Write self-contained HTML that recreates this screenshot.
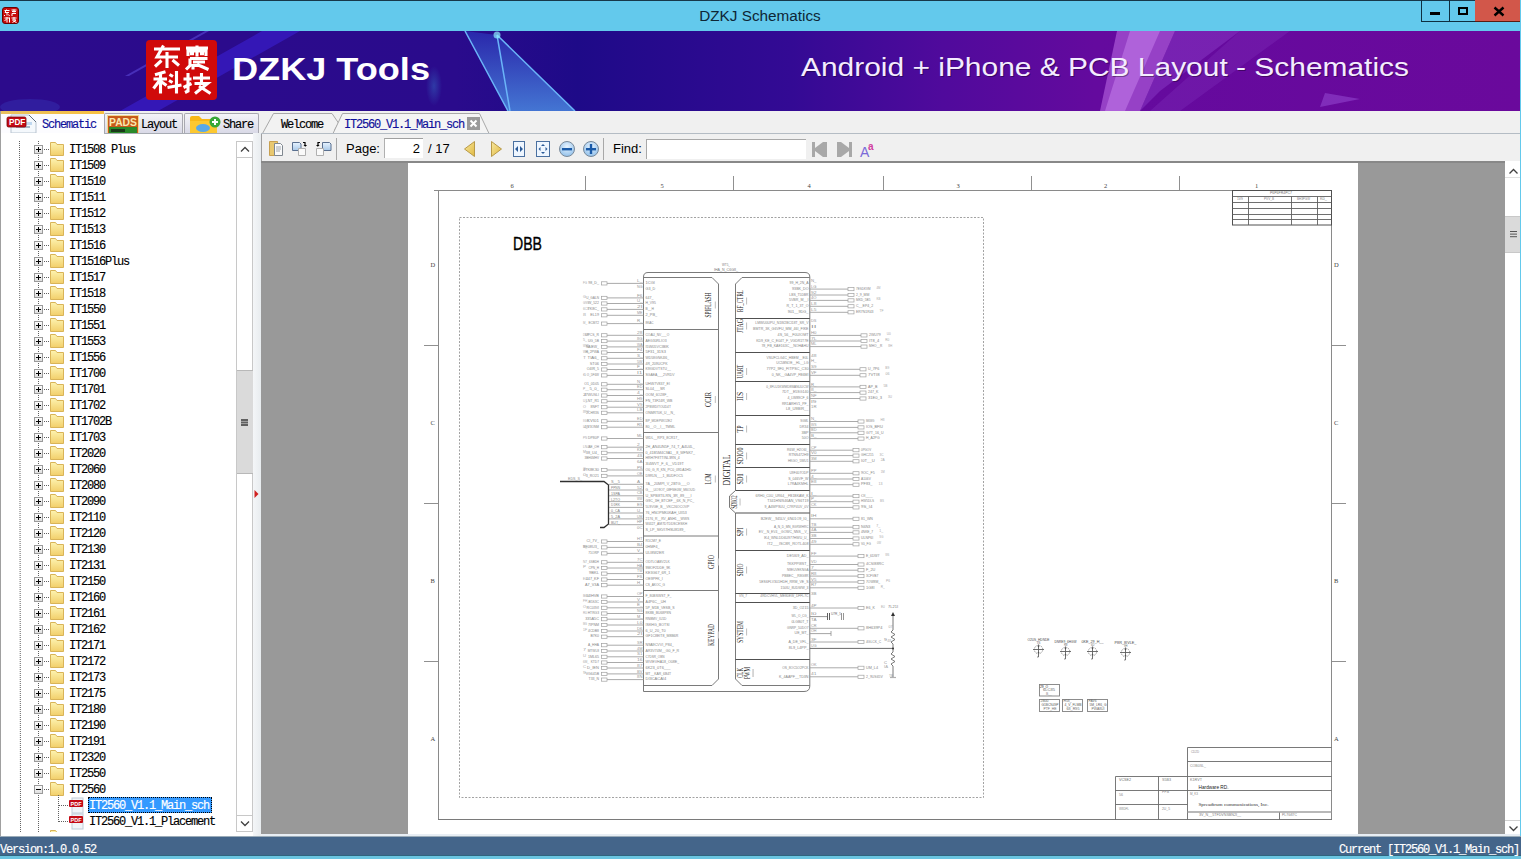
<!DOCTYPE html>
<html><head><meta charset="utf-8">
<style>
*{margin:0;padding:0;box-sizing:border-box}
html,body{width:1521px;height:859px;overflow:hidden;background:#f0f0f0;font-family:"Liberation Sans",sans-serif}
.abs{position:absolute}
.mono{font-family:"Liberation Mono",monospace;font-size:12px;letter-spacing:-1.2px;white-space:pre;line-height:16px;-webkit-text-stroke:0.15px currentColor}
#title{left:0;top:0;width:1521px;height:31px;background:#63c9ec;border-top:1px solid #17384a}
#banner{left:0;top:31px;width:1520px;height:80px;overflow:hidden}
#tabs{left:0;top:111px;width:1520px;height:22px;background:#f0f0f0}
#left{left:0;top:133px;width:258px;height:703px;background:#fff;border-left:1px solid #a0a0a0}
#tool{left:261px;top:133px;width:1259px;height:28px;background:#f0f0f0;border-top:1px solid #b4bcc4}
#viewer{left:261px;top:161px;width:1244px;height:673px;background:#999;border-top:2px solid #888}
#page{left:408px;top:163px;width:950px;height:671px;background:#fff}
#vscroll{left:1505px;top:161px;width:15px;height:673px;background:#fff}
#status{left:0;top:836px;width:1521px;height:23px;background:#44658a;border-top:1px solid #9aabb8;border-bottom:3px solid #6ac4e0;box-shadow:inset 0 -1px 0 #30647e}
#rborder{left:1520px;top:0;width:1px;height:859px;background:#63c9ec}
</style></head><body>
<div id="title" class="abs">
 <svg class="abs" style="left:2px;top:6px" width="17" height="17" viewBox="0 0 17 17">
  <rect x="0.5" y="0.5" width="16" height="16" rx="2.5" fill="#c80c0c" stroke="#6a0000" stroke-width="1"/>
  <g stroke="#fff" stroke-width="1" fill="none">
   <path d="M2.5 3.5h5M4.5 2.5l-1.5 3h4M5 5v3.5M3 8l-1 1M6.5 7.5l1 1.5M9.5 3h5M12 2.5v3M10 4.5h4M10 6.5h4M10 6.5v2.5"/>
   <path d="M2.5 11h5M5 10v5.5M4.5 12l-2 2M7.5 10.5v5M9.5 11h5M12 10v3M10 13h4l-3.5 2.5M11.5 14l3 1.5"/>
  </g>
 </svg>
 <div class="abs" style="left:0;width:1520px;top:6px;text-align:center;font-size:15.3px;color:#0e2636">DZKJ Schematics</div>
 <div class="abs" style="left:1421px;top:-1px;width:29px;height:22px;border:1px solid #0e2f40;border-top:none;border-right:none"></div>
 <div class="abs" style="left:1449px;top:-1px;width:27px;height:22px;border:1px solid #0e2f40;border-top:none"></div>
 <div class="abs" style="left:1475px;top:-1px;width:46px;height:22px;background:#d2574a;border-bottom:1px solid #5a1a10"></div>
 <div class="abs" style="left:1430px;top:11px;width:10px;height:3px;background:#000"></div>
 <div class="abs" style="left:1458px;top:6px;width:10px;height:8px;border:2px solid #000"></div>
 <svg class="abs" style="left:1493px;top:5px" width="12" height="11" viewBox="0 0 12 11"><path d="M1.5 1.5L10.5 9.5M10.5 1.5L1.5 9.5" stroke="#000" stroke-width="2.4"/></svg>
</div>
<div id="banner" class="abs">
 <svg width="1520" height="80" viewBox="0 0 1520 80" style="display:block">
  <defs>
   <linearGradient id="bg" x1="0" x2="1" y1="0" y2="0">
    <stop offset="0" stop-color="#2c0b8c"/>
    <stop offset="0.30" stop-color="#2a0b8c"/>
    <stop offset="0.38" stop-color="#1e0a88"/>
    <stop offset="0.52" stop-color="#330a94"/>
    <stop offset="0.62" stop-color="#500a9c"/>
    <stop offset="0.72" stop-color="#640a9e"/>
    <stop offset="1" stop-color="#6a099c"/>
   </linearGradient>
   <radialGradient id="glow" cx="0.5" cy="0.5" r="0.5"><stop offset="0" stop-color="#3aa0e0" stop-opacity="0.9"/><stop offset="1" stop-color="#3aa0e0" stop-opacity="0"/></radialGradient>
   <linearGradient id="tri" x1="0" y1="0" x2="0" y2="1"><stop offset="0" stop-color="#2a2cb0"/><stop offset="1" stop-color="#4a88e0"/></linearGradient>
  </defs>
  <rect width="1520" height="80" fill="url(#bg)"/>
  <polygon points="120,80 262,0 300,0 158,80" fill="#3c22d8" opacity="0.55"/>
  <polygon points="125,45 205,0 209,0 129,45" fill="#6a5af0" opacity="0.45"/>
  <ellipse cx="30" cy="76" rx="30" ry="8" fill="#3a40c0" opacity="0.35"/>
  <ellipse cx="434" cy="55" rx="8" ry="20" fill="url(#glow)" opacity="0.35"/>
  <polygon points="465,0 497,4 575,80 508,80" fill="url(#tri)" opacity="0.85"/>
  <path d="M465,0 L508,80 M497,4 L510,80 M497,4 L575,80" stroke="#6ab4f8" stroke-width="1.5" fill="none"/>
  <circle cx="497" cy="4" r="3.5" fill="#8ef0ff" opacity="0.7"/>
  <polygon points="1117,0 1175,0 1140,80 1100,80" fill="#c070e8" opacity="0.55"/>
  <polygon points="1130,0 1160,0 1125,80 1105,80" fill="#e0a0ff" opacity="0.35"/>
  <polygon points="1175,0 1240,0 1160,60 1140,80" fill="#9a50d8" opacity="0.35"/>
  <polygon points="1240,0 1290,0 1180,80 1150,80" fill="#8a40c8" opacity="0.25"/>
  <polygon points="1325,62 1360,68 1320,76" fill="#9a50d8" opacity="0.5"/>
  <rect x="146" y="9" width="71" height="60" rx="4" fill="#d00a0a"/>
  <g stroke="#fff" stroke-width="3.1" fill="none" stroke-linecap="butt" stroke-linejoin="miter">
   <path d="M154,18 H180 M163.5,14.5 L157,26 H178 M167,21 V37 M161.5,29.5 L155,35.5 M172.5,29 L179,34.5"/>
   <path d="M186,17 H208 M197,14.5 V25.5 M188,25 V20 H206 V25 M190,22.8 H194 M200,22.8 H204 M190,27.5 H207.5 M190,27.5 V34.5 L186,38.5 M193,31 H205 M193,34.5 H200 M193,33 V38.5 M197,33.5 L208.5,38.5"/>
   <path d="M165.5,40.8 L155,43.8 M153.5,48 H167 M160.5,42 V62.5 M160,49 L153.5,57.5 M161,50.5 L166.5,54.5 M169.5,43.5 L173,45.5 M169,49.5 L172.5,51.5 M167.5,56.5 L181.5,54 M176.5,40 V62.5"/>
   <path d="M183.5,48 H191.5 M188,42 V60 L185,61.5 M183.5,56.5 L191.5,52.5 M193,47 H210 M201.5,42 V52 M194.5,52.5 H207.5 L195,62.5 M199,55 L210.5,62.5"/>
  </g>
  <g fill="#fff" font-family="Liberation Sans" >
   <text x="232" y="48.8" font-size="30.5" font-weight="bold" textLength="198" lengthAdjust="spacingAndGlyphs">DZKJ Tools</text>
  </g>
  <text x="801" y="44.7" font-size="25.5" fill="#000" opacity="0.35" font-family="Liberation Sans" textLength="608" lengthAdjust="spacingAndGlyphs" transform="translate(1,1)">Android + iPhone &amp; PCB Layout - Schematics</text>
  <text x="801" y="44.7" font-size="25.5" fill="#f4ecff" font-family="Liberation Sans" textLength="608" lengthAdjust="spacingAndGlyphs">Android + iPhone &amp; PCB Layout - Schematics</text>
 </svg>
</div>
<div id="rborder" class="abs"></div>
<div id="tabs" class="abs">
 <!-- Schematic active tab -->
 <div class="abs" style="left:0;top:0;width:104px;height:23px;background:#fcfcff;border-left:1px solid #a0a0a0"></div>
 <div class="abs" style="left:1px;top:0;width:103px;height:3px;background:linear-gradient(90deg,#e8c060,#f8c040)"></div>
 <svg class="abs" style="left:5px;top:2px" width="36" height="22" viewBox="0 0 36 22">
  <path d="M6 2 H24 L31 9 V20 H6 Z" fill="#f4f8fc" stroke="#b8c4d0" stroke-width="1"/>
  <path d="M24 2 L31 9" stroke="#607080" stroke-width="1"/>
  <rect x="11" y="13" width="14" height="2" fill="#a8b8c8"/>
  <rect x="19" y="9" width="8" height="3" fill="#c0d8f0"/>
  <rect x="2" y="4" width="19" height="10" rx="1.5" fill="#c40a14" stroke="#7a0008" stroke-width="0.8"/>
  <text x="4" y="12.3" font-size="8.2" font-weight="bold" fill="#fff" font-family="Liberation Sans">PDF</text>
 </svg>
 <div class="abs mono" style="left:42px;top:6px;color:#10109a">Schematic</div>
 <!-- Layout tab -->
 <div class="abs" style="left:104px;top:2px;width:79px;height:21px;background:linear-gradient(#f4f4f8,#d8d8e6);border:1px solid #a8a8b0;border-bottom:none;border-radius:2px 2px 0 0"></div>
 <svg class="abs" style="left:107px;top:4px" width="32" height="19" viewBox="0 0 32 19">
  <rect x="0.5" y="0.5" width="31" height="18.5" fill="#c85a1a" stroke="#f0d890" stroke-width="1"/>
  <text x="2" y="10.5" font-size="10.5" font-weight="bold" fill="#f8e8b0" font-family="Liberation Sans" textLength="28" lengthAdjust="spacingAndGlyphs">PADS</text>
  <rect x="2" y="12" width="28" height="7" fill="#2a8a2a"/>
  <rect x="4" y="14" width="14" height="3" fill="#1a3a1a"/>
 </svg>
 <div class="abs mono" style="left:141px;top:6px;color:#000">Layout</div>
 <!-- Share tab -->
 <div class="abs" style="left:184px;top:2px;width:75px;height:21px;background:linear-gradient(#f4f4f8,#d8d8e6);border:1px solid #a8a8b0;border-bottom:none;border-radius:2px 2px 0 0"></div>
 <svg class="abs" style="left:189px;top:4px" width="34" height="19" viewBox="0 0 34 19">
  <path d="M1 3 Q1 1 3 1 H10 L13 4 H28 V19 H1 Z" fill="#f8b818"/>
  <path d="M1 6 H28 V19 H1 Z" fill="#fcc830"/>
  <ellipse cx="14" cy="13" rx="7" ry="4" fill="#58a8e8"/>
  <circle cx="26" cy="7" r="5.5" fill="#38a838"/>
  <path d="M26 4 V10 M23 7 H29" stroke="#fff" stroke-width="2"/>
 </svg>
 <div class="abs mono" style="left:223px;top:6px;color:#000">Share</div>
 <!-- Welcome tab -->
 <svg class="abs" style="left:258px;top:0" width="240" height="23" viewBox="0 0 240 23">
  <path d="M4.5 22.5 L15.5 2.5 H74 L80.5 12 L76.5 19" fill="#f2f2f2" stroke="#a8a8a8" stroke-width="1"/>
  <path d="M75 22.5 L84.5 2.5 H221.5 L231 22.5" fill="#f4f4f4" stroke="#a8a8a8" stroke-width="1"/>
  <path d="M0 22.5 H4.5" stroke="#a8a8a8"/>
 </svg>
 <div class="abs mono" style="left:281px;top:6px;color:#000">Welcome</div>
 <div class="abs mono" style="left:344px;top:6px;color:#10109a">IT2560_V1.1_Main_sch</div>
 <div class="abs" style="left:467px;top:6px;width:13px;height:13px;background:#9a9a9a"></div>
 <svg class="abs" style="left:467px;top:6px" width="13" height="13" viewBox="0 0 13 13"><path d="M3.5 3.5L9.5 9.5M9.5 3.5L3.5 9.5" stroke="#fff" stroke-width="2"/></svg>
</div>
<div id="left" class="abs" style="overflow:hidden">
<svg class="abs" style="left:0;top:0" width="258" height="703" viewBox="0 133 258 703">
<defs><linearGradient id="fold" x1="0" y1="0" x2="0" y2="1"><stop offset="0" stop-color="#fdf3b0"/><stop offset="1" stop-color="#f2cf6a"/></linearGradient><linearGradient id="pbox" x1="0" y1="0" x2="0" y2="1"><stop offset="0" stop-color="#ffffff"/><stop offset="1" stop-color="#dcdcdc"/></linearGradient></defs>
<line x1="18.5" y1="141" x2="19.5" y2="832" stroke="#606060" stroke-width="1" stroke-dasharray="1 1"/>
<line x1="37.5" y1="141" x2="37.5" y2="832" stroke="#606060" stroke-width="1" stroke-dasharray="1 1"/>
<line x1="43" y1="149.5" x2="49" y2="149.5" stroke="#606060" stroke-dasharray="1 1"/>
<rect x="33.5" y="145.5" width="8" height="8" fill="url(#pbox)" stroke="#9a9a9a"/>
<path d="M35 149.5h5" stroke="#000" stroke-width="1"/>
<path d="M37.5 147v5" stroke="#000" stroke-width="1"/>
<path d="M49.5 142.5 h5 l1.5 2 h6.5 v11 h-13 z" fill="url(#fold)" stroke="#d9b458" stroke-width="1"/>
<line x1="43" y1="165.5" x2="49" y2="165.5" stroke="#606060" stroke-dasharray="1 1"/>
<rect x="33.5" y="161.5" width="8" height="8" fill="url(#pbox)" stroke="#9a9a9a"/>
<path d="M35 165.5h5" stroke="#000" stroke-width="1"/>
<path d="M37.5 163v5" stroke="#000" stroke-width="1"/>
<path d="M49.5 158.5 h5 l1.5 2 h6.5 v11 h-13 z" fill="url(#fold)" stroke="#d9b458" stroke-width="1"/>
<line x1="43" y1="181.5" x2="49" y2="181.5" stroke="#606060" stroke-dasharray="1 1"/>
<rect x="33.5" y="177.5" width="8" height="8" fill="url(#pbox)" stroke="#9a9a9a"/>
<path d="M35 181.5h5" stroke="#000" stroke-width="1"/>
<path d="M37.5 179v5" stroke="#000" stroke-width="1"/>
<path d="M49.5 174.5 h5 l1.5 2 h6.5 v11 h-13 z" fill="url(#fold)" stroke="#d9b458" stroke-width="1"/>
<line x1="43" y1="197.5" x2="49" y2="197.5" stroke="#606060" stroke-dasharray="1 1"/>
<rect x="33.5" y="193.5" width="8" height="8" fill="url(#pbox)" stroke="#9a9a9a"/>
<path d="M35 197.5h5" stroke="#000" stroke-width="1"/>
<path d="M37.5 195v5" stroke="#000" stroke-width="1"/>
<path d="M49.5 190.5 h5 l1.5 2 h6.5 v11 h-13 z" fill="url(#fold)" stroke="#d9b458" stroke-width="1"/>
<line x1="43" y1="213.5" x2="49" y2="213.5" stroke="#606060" stroke-dasharray="1 1"/>
<rect x="33.5" y="209.5" width="8" height="8" fill="url(#pbox)" stroke="#9a9a9a"/>
<path d="M35 213.5h5" stroke="#000" stroke-width="1"/>
<path d="M37.5 211v5" stroke="#000" stroke-width="1"/>
<path d="M49.5 206.5 h5 l1.5 2 h6.5 v11 h-13 z" fill="url(#fold)" stroke="#d9b458" stroke-width="1"/>
<line x1="43" y1="229.5" x2="49" y2="229.5" stroke="#606060" stroke-dasharray="1 1"/>
<rect x="33.5" y="225.5" width="8" height="8" fill="url(#pbox)" stroke="#9a9a9a"/>
<path d="M35 229.5h5" stroke="#000" stroke-width="1"/>
<path d="M37.5 227v5" stroke="#000" stroke-width="1"/>
<path d="M49.5 222.5 h5 l1.5 2 h6.5 v11 h-13 z" fill="url(#fold)" stroke="#d9b458" stroke-width="1"/>
<line x1="43" y1="245.5" x2="49" y2="245.5" stroke="#606060" stroke-dasharray="1 1"/>
<rect x="33.5" y="241.5" width="8" height="8" fill="url(#pbox)" stroke="#9a9a9a"/>
<path d="M35 245.5h5" stroke="#000" stroke-width="1"/>
<path d="M37.5 243v5" stroke="#000" stroke-width="1"/>
<path d="M49.5 238.5 h5 l1.5 2 h6.5 v11 h-13 z" fill="url(#fold)" stroke="#d9b458" stroke-width="1"/>
<line x1="43" y1="261.5" x2="49" y2="261.5" stroke="#606060" stroke-dasharray="1 1"/>
<rect x="33.5" y="257.5" width="8" height="8" fill="url(#pbox)" stroke="#9a9a9a"/>
<path d="M35 261.5h5" stroke="#000" stroke-width="1"/>
<path d="M37.5 259v5" stroke="#000" stroke-width="1"/>
<path d="M49.5 254.5 h5 l1.5 2 h6.5 v11 h-13 z" fill="url(#fold)" stroke="#d9b458" stroke-width="1"/>
<line x1="43" y1="277.5" x2="49" y2="277.5" stroke="#606060" stroke-dasharray="1 1"/>
<rect x="33.5" y="273.5" width="8" height="8" fill="url(#pbox)" stroke="#9a9a9a"/>
<path d="M35 277.5h5" stroke="#000" stroke-width="1"/>
<path d="M37.5 275v5" stroke="#000" stroke-width="1"/>
<path d="M49.5 270.5 h5 l1.5 2 h6.5 v11 h-13 z" fill="url(#fold)" stroke="#d9b458" stroke-width="1"/>
<line x1="43" y1="293.5" x2="49" y2="293.5" stroke="#606060" stroke-dasharray="1 1"/>
<rect x="33.5" y="289.5" width="8" height="8" fill="url(#pbox)" stroke="#9a9a9a"/>
<path d="M35 293.5h5" stroke="#000" stroke-width="1"/>
<path d="M37.5 291v5" stroke="#000" stroke-width="1"/>
<path d="M49.5 286.5 h5 l1.5 2 h6.5 v11 h-13 z" fill="url(#fold)" stroke="#d9b458" stroke-width="1"/>
<line x1="43" y1="309.5" x2="49" y2="309.5" stroke="#606060" stroke-dasharray="1 1"/>
<rect x="33.5" y="305.5" width="8" height="8" fill="url(#pbox)" stroke="#9a9a9a"/>
<path d="M35 309.5h5" stroke="#000" stroke-width="1"/>
<path d="M37.5 307v5" stroke="#000" stroke-width="1"/>
<path d="M49.5 302.5 h5 l1.5 2 h6.5 v11 h-13 z" fill="url(#fold)" stroke="#d9b458" stroke-width="1"/>
<line x1="43" y1="325.5" x2="49" y2="325.5" stroke="#606060" stroke-dasharray="1 1"/>
<rect x="33.5" y="321.5" width="8" height="8" fill="url(#pbox)" stroke="#9a9a9a"/>
<path d="M35 325.5h5" stroke="#000" stroke-width="1"/>
<path d="M37.5 323v5" stroke="#000" stroke-width="1"/>
<path d="M49.5 318.5 h5 l1.5 2 h6.5 v11 h-13 z" fill="url(#fold)" stroke="#d9b458" stroke-width="1"/>
<line x1="43" y1="341.5" x2="49" y2="341.5" stroke="#606060" stroke-dasharray="1 1"/>
<rect x="33.5" y="337.5" width="8" height="8" fill="url(#pbox)" stroke="#9a9a9a"/>
<path d="M35 341.5h5" stroke="#000" stroke-width="1"/>
<path d="M37.5 339v5" stroke="#000" stroke-width="1"/>
<path d="M49.5 334.5 h5 l1.5 2 h6.5 v11 h-13 z" fill="url(#fold)" stroke="#d9b458" stroke-width="1"/>
<line x1="43" y1="357.5" x2="49" y2="357.5" stroke="#606060" stroke-dasharray="1 1"/>
<rect x="33.5" y="353.5" width="8" height="8" fill="url(#pbox)" stroke="#9a9a9a"/>
<path d="M35 357.5h5" stroke="#000" stroke-width="1"/>
<path d="M37.5 355v5" stroke="#000" stroke-width="1"/>
<path d="M49.5 350.5 h5 l1.5 2 h6.5 v11 h-13 z" fill="url(#fold)" stroke="#d9b458" stroke-width="1"/>
<line x1="43" y1="373.5" x2="49" y2="373.5" stroke="#606060" stroke-dasharray="1 1"/>
<rect x="33.5" y="369.5" width="8" height="8" fill="url(#pbox)" stroke="#9a9a9a"/>
<path d="M35 373.5h5" stroke="#000" stroke-width="1"/>
<path d="M37.5 371v5" stroke="#000" stroke-width="1"/>
<path d="M49.5 366.5 h5 l1.5 2 h6.5 v11 h-13 z" fill="url(#fold)" stroke="#d9b458" stroke-width="1"/>
<line x1="43" y1="389.5" x2="49" y2="389.5" stroke="#606060" stroke-dasharray="1 1"/>
<rect x="33.5" y="385.5" width="8" height="8" fill="url(#pbox)" stroke="#9a9a9a"/>
<path d="M35 389.5h5" stroke="#000" stroke-width="1"/>
<path d="M37.5 387v5" stroke="#000" stroke-width="1"/>
<path d="M49.5 382.5 h5 l1.5 2 h6.5 v11 h-13 z" fill="url(#fold)" stroke="#d9b458" stroke-width="1"/>
<line x1="43" y1="405.5" x2="49" y2="405.5" stroke="#606060" stroke-dasharray="1 1"/>
<rect x="33.5" y="401.5" width="8" height="8" fill="url(#pbox)" stroke="#9a9a9a"/>
<path d="M35 405.5h5" stroke="#000" stroke-width="1"/>
<path d="M37.5 403v5" stroke="#000" stroke-width="1"/>
<path d="M49.5 398.5 h5 l1.5 2 h6.5 v11 h-13 z" fill="url(#fold)" stroke="#d9b458" stroke-width="1"/>
<line x1="43" y1="421.5" x2="49" y2="421.5" stroke="#606060" stroke-dasharray="1 1"/>
<rect x="33.5" y="417.5" width="8" height="8" fill="url(#pbox)" stroke="#9a9a9a"/>
<path d="M35 421.5h5" stroke="#000" stroke-width="1"/>
<path d="M37.5 419v5" stroke="#000" stroke-width="1"/>
<path d="M49.5 414.5 h5 l1.5 2 h6.5 v11 h-13 z" fill="url(#fold)" stroke="#d9b458" stroke-width="1"/>
<line x1="43" y1="437.5" x2="49" y2="437.5" stroke="#606060" stroke-dasharray="1 1"/>
<rect x="33.5" y="433.5" width="8" height="8" fill="url(#pbox)" stroke="#9a9a9a"/>
<path d="M35 437.5h5" stroke="#000" stroke-width="1"/>
<path d="M37.5 435v5" stroke="#000" stroke-width="1"/>
<path d="M49.5 430.5 h5 l1.5 2 h6.5 v11 h-13 z" fill="url(#fold)" stroke="#d9b458" stroke-width="1"/>
<line x1="43" y1="453.5" x2="49" y2="453.5" stroke="#606060" stroke-dasharray="1 1"/>
<rect x="33.5" y="449.5" width="8" height="8" fill="url(#pbox)" stroke="#9a9a9a"/>
<path d="M35 453.5h5" stroke="#000" stroke-width="1"/>
<path d="M37.5 451v5" stroke="#000" stroke-width="1"/>
<path d="M49.5 446.5 h5 l1.5 2 h6.5 v11 h-13 z" fill="url(#fold)" stroke="#d9b458" stroke-width="1"/>
<line x1="43" y1="469.5" x2="49" y2="469.5" stroke="#606060" stroke-dasharray="1 1"/>
<rect x="33.5" y="465.5" width="8" height="8" fill="url(#pbox)" stroke="#9a9a9a"/>
<path d="M35 469.5h5" stroke="#000" stroke-width="1"/>
<path d="M37.5 467v5" stroke="#000" stroke-width="1"/>
<path d="M49.5 462.5 h5 l1.5 2 h6.5 v11 h-13 z" fill="url(#fold)" stroke="#d9b458" stroke-width="1"/>
<line x1="43" y1="485.5" x2="49" y2="485.5" stroke="#606060" stroke-dasharray="1 1"/>
<rect x="33.5" y="481.5" width="8" height="8" fill="url(#pbox)" stroke="#9a9a9a"/>
<path d="M35 485.5h5" stroke="#000" stroke-width="1"/>
<path d="M37.5 483v5" stroke="#000" stroke-width="1"/>
<path d="M49.5 478.5 h5 l1.5 2 h6.5 v11 h-13 z" fill="url(#fold)" stroke="#d9b458" stroke-width="1"/>
<line x1="43" y1="501.5" x2="49" y2="501.5" stroke="#606060" stroke-dasharray="1 1"/>
<rect x="33.5" y="497.5" width="8" height="8" fill="url(#pbox)" stroke="#9a9a9a"/>
<path d="M35 501.5h5" stroke="#000" stroke-width="1"/>
<path d="M37.5 499v5" stroke="#000" stroke-width="1"/>
<path d="M49.5 494.5 h5 l1.5 2 h6.5 v11 h-13 z" fill="url(#fold)" stroke="#d9b458" stroke-width="1"/>
<line x1="43" y1="517.5" x2="49" y2="517.5" stroke="#606060" stroke-dasharray="1 1"/>
<rect x="33.5" y="513.5" width="8" height="8" fill="url(#pbox)" stroke="#9a9a9a"/>
<path d="M35 517.5h5" stroke="#000" stroke-width="1"/>
<path d="M37.5 515v5" stroke="#000" stroke-width="1"/>
<path d="M49.5 510.5 h5 l1.5 2 h6.5 v11 h-13 z" fill="url(#fold)" stroke="#d9b458" stroke-width="1"/>
<line x1="43" y1="533.5" x2="49" y2="533.5" stroke="#606060" stroke-dasharray="1 1"/>
<rect x="33.5" y="529.5" width="8" height="8" fill="url(#pbox)" stroke="#9a9a9a"/>
<path d="M35 533.5h5" stroke="#000" stroke-width="1"/>
<path d="M37.5 531v5" stroke="#000" stroke-width="1"/>
<path d="M49.5 526.5 h5 l1.5 2 h6.5 v11 h-13 z" fill="url(#fold)" stroke="#d9b458" stroke-width="1"/>
<line x1="43" y1="549.5" x2="49" y2="549.5" stroke="#606060" stroke-dasharray="1 1"/>
<rect x="33.5" y="545.5" width="8" height="8" fill="url(#pbox)" stroke="#9a9a9a"/>
<path d="M35 549.5h5" stroke="#000" stroke-width="1"/>
<path d="M37.5 547v5" stroke="#000" stroke-width="1"/>
<path d="M49.5 542.5 h5 l1.5 2 h6.5 v11 h-13 z" fill="url(#fold)" stroke="#d9b458" stroke-width="1"/>
<line x1="43" y1="565.5" x2="49" y2="565.5" stroke="#606060" stroke-dasharray="1 1"/>
<rect x="33.5" y="561.5" width="8" height="8" fill="url(#pbox)" stroke="#9a9a9a"/>
<path d="M35 565.5h5" stroke="#000" stroke-width="1"/>
<path d="M37.5 563v5" stroke="#000" stroke-width="1"/>
<path d="M49.5 558.5 h5 l1.5 2 h6.5 v11 h-13 z" fill="url(#fold)" stroke="#d9b458" stroke-width="1"/>
<line x1="43" y1="581.5" x2="49" y2="581.5" stroke="#606060" stroke-dasharray="1 1"/>
<rect x="33.5" y="577.5" width="8" height="8" fill="url(#pbox)" stroke="#9a9a9a"/>
<path d="M35 581.5h5" stroke="#000" stroke-width="1"/>
<path d="M37.5 579v5" stroke="#000" stroke-width="1"/>
<path d="M49.5 574.5 h5 l1.5 2 h6.5 v11 h-13 z" fill="url(#fold)" stroke="#d9b458" stroke-width="1"/>
<line x1="43" y1="597.5" x2="49" y2="597.5" stroke="#606060" stroke-dasharray="1 1"/>
<rect x="33.5" y="593.5" width="8" height="8" fill="url(#pbox)" stroke="#9a9a9a"/>
<path d="M35 597.5h5" stroke="#000" stroke-width="1"/>
<path d="M37.5 595v5" stroke="#000" stroke-width="1"/>
<path d="M49.5 590.5 h5 l1.5 2 h6.5 v11 h-13 z" fill="url(#fold)" stroke="#d9b458" stroke-width="1"/>
<line x1="43" y1="613.5" x2="49" y2="613.5" stroke="#606060" stroke-dasharray="1 1"/>
<rect x="33.5" y="609.5" width="8" height="8" fill="url(#pbox)" stroke="#9a9a9a"/>
<path d="M35 613.5h5" stroke="#000" stroke-width="1"/>
<path d="M37.5 611v5" stroke="#000" stroke-width="1"/>
<path d="M49.5 606.5 h5 l1.5 2 h6.5 v11 h-13 z" fill="url(#fold)" stroke="#d9b458" stroke-width="1"/>
<line x1="43" y1="629.5" x2="49" y2="629.5" stroke="#606060" stroke-dasharray="1 1"/>
<rect x="33.5" y="625.5" width="8" height="8" fill="url(#pbox)" stroke="#9a9a9a"/>
<path d="M35 629.5h5" stroke="#000" stroke-width="1"/>
<path d="M37.5 627v5" stroke="#000" stroke-width="1"/>
<path d="M49.5 622.5 h5 l1.5 2 h6.5 v11 h-13 z" fill="url(#fold)" stroke="#d9b458" stroke-width="1"/>
<line x1="43" y1="645.5" x2="49" y2="645.5" stroke="#606060" stroke-dasharray="1 1"/>
<rect x="33.5" y="641.5" width="8" height="8" fill="url(#pbox)" stroke="#9a9a9a"/>
<path d="M35 645.5h5" stroke="#000" stroke-width="1"/>
<path d="M37.5 643v5" stroke="#000" stroke-width="1"/>
<path d="M49.5 638.5 h5 l1.5 2 h6.5 v11 h-13 z" fill="url(#fold)" stroke="#d9b458" stroke-width="1"/>
<line x1="43" y1="661.5" x2="49" y2="661.5" stroke="#606060" stroke-dasharray="1 1"/>
<rect x="33.5" y="657.5" width="8" height="8" fill="url(#pbox)" stroke="#9a9a9a"/>
<path d="M35 661.5h5" stroke="#000" stroke-width="1"/>
<path d="M37.5 659v5" stroke="#000" stroke-width="1"/>
<path d="M49.5 654.5 h5 l1.5 2 h6.5 v11 h-13 z" fill="url(#fold)" stroke="#d9b458" stroke-width="1"/>
<line x1="43" y1="677.5" x2="49" y2="677.5" stroke="#606060" stroke-dasharray="1 1"/>
<rect x="33.5" y="673.5" width="8" height="8" fill="url(#pbox)" stroke="#9a9a9a"/>
<path d="M35 677.5h5" stroke="#000" stroke-width="1"/>
<path d="M37.5 675v5" stroke="#000" stroke-width="1"/>
<path d="M49.5 670.5 h5 l1.5 2 h6.5 v11 h-13 z" fill="url(#fold)" stroke="#d9b458" stroke-width="1"/>
<line x1="43" y1="693.5" x2="49" y2="693.5" stroke="#606060" stroke-dasharray="1 1"/>
<rect x="33.5" y="689.5" width="8" height="8" fill="url(#pbox)" stroke="#9a9a9a"/>
<path d="M35 693.5h5" stroke="#000" stroke-width="1"/>
<path d="M37.5 691v5" stroke="#000" stroke-width="1"/>
<path d="M49.5 686.5 h5 l1.5 2 h6.5 v11 h-13 z" fill="url(#fold)" stroke="#d9b458" stroke-width="1"/>
<line x1="43" y1="709.5" x2="49" y2="709.5" stroke="#606060" stroke-dasharray="1 1"/>
<rect x="33.5" y="705.5" width="8" height="8" fill="url(#pbox)" stroke="#9a9a9a"/>
<path d="M35 709.5h5" stroke="#000" stroke-width="1"/>
<path d="M37.5 707v5" stroke="#000" stroke-width="1"/>
<path d="M49.5 702.5 h5 l1.5 2 h6.5 v11 h-13 z" fill="url(#fold)" stroke="#d9b458" stroke-width="1"/>
<line x1="43" y1="725.5" x2="49" y2="725.5" stroke="#606060" stroke-dasharray="1 1"/>
<rect x="33.5" y="721.5" width="8" height="8" fill="url(#pbox)" stroke="#9a9a9a"/>
<path d="M35 725.5h5" stroke="#000" stroke-width="1"/>
<path d="M37.5 723v5" stroke="#000" stroke-width="1"/>
<path d="M49.5 718.5 h5 l1.5 2 h6.5 v11 h-13 z" fill="url(#fold)" stroke="#d9b458" stroke-width="1"/>
<line x1="43" y1="741.5" x2="49" y2="741.5" stroke="#606060" stroke-dasharray="1 1"/>
<rect x="33.5" y="737.5" width="8" height="8" fill="url(#pbox)" stroke="#9a9a9a"/>
<path d="M35 741.5h5" stroke="#000" stroke-width="1"/>
<path d="M37.5 739v5" stroke="#000" stroke-width="1"/>
<path d="M49.5 734.5 h5 l1.5 2 h6.5 v11 h-13 z" fill="url(#fold)" stroke="#d9b458" stroke-width="1"/>
<line x1="43" y1="757.5" x2="49" y2="757.5" stroke="#606060" stroke-dasharray="1 1"/>
<rect x="33.5" y="753.5" width="8" height="8" fill="url(#pbox)" stroke="#9a9a9a"/>
<path d="M35 757.5h5" stroke="#000" stroke-width="1"/>
<path d="M37.5 755v5" stroke="#000" stroke-width="1"/>
<path d="M49.5 750.5 h5 l1.5 2 h6.5 v11 h-13 z" fill="url(#fold)" stroke="#d9b458" stroke-width="1"/>
<line x1="43" y1="773.5" x2="49" y2="773.5" stroke="#606060" stroke-dasharray="1 1"/>
<rect x="33.5" y="769.5" width="8" height="8" fill="url(#pbox)" stroke="#9a9a9a"/>
<path d="M35 773.5h5" stroke="#000" stroke-width="1"/>
<path d="M37.5 771v5" stroke="#000" stroke-width="1"/>
<path d="M49.5 766.5 h5 l1.5 2 h6.5 v11 h-13 z" fill="url(#fold)" stroke="#d9b458" stroke-width="1"/>
<line x1="43" y1="789.5" x2="49" y2="789.5" stroke="#606060" stroke-dasharray="1 1"/>
<rect x="33.5" y="785.5" width="8" height="8" fill="url(#pbox)" stroke="#9a9a9a"/>
<path d="M35 789.5h5" stroke="#000" stroke-width="1"/>
<path d="M49.5 782.5 h5 l1.5 2 h6.5 v11 h-13 z" fill="url(#fold)" stroke="#d9b458" stroke-width="1"/>
<line x1="58" y1="805.5" x2="68" y2="805.5" stroke="#606060" stroke-dasharray="1 1"/>
<rect x="71" y="798" width="11" height="15" fill="#f0f4f8" stroke="#c0ccd8"/>
<rect x="68" y="800" width="14" height="7" rx="1" fill="#c40a14"/>
<text x="69.5" y="805.8" font-size="5.5" font-weight="bold" fill="#fff" font-family="Liberation Sans">PDF</text>
<line x1="58" y1="821.5" x2="68" y2="821.5" stroke="#606060" stroke-dasharray="1 1"/>
<rect x="71" y="814" width="11" height="15" fill="#f0f4f8" stroke="#c0ccd8"/>
<rect x="68" y="816" width="14" height="7" rx="1" fill="#c40a14"/>
<text x="69.5" y="821.8" font-size="5.5" font-weight="bold" fill="#fff" font-family="Liberation Sans">PDF</text>
<line x1="57.5" y1="795" x2="57.5" y2="822" stroke="#606060" stroke-dasharray="1 1"/>
<path d="M49.5 830.5 h5 l1.5 2 h6.5 v11 h-13 z" fill="url(#fold)" stroke="#d9b458" stroke-width="1"/>
</svg>
<div class="abs mono" style="left:68px;top:9px;color:#000">IT1508 Plus</div>
<div class="abs mono" style="left:68px;top:25px;color:#000">IT1509</div>
<div class="abs mono" style="left:68px;top:41px;color:#000">IT1510</div>
<div class="abs mono" style="left:68px;top:57px;color:#000">IT1511</div>
<div class="abs mono" style="left:68px;top:73px;color:#000">IT1512</div>
<div class="abs mono" style="left:68px;top:89px;color:#000">IT1513</div>
<div class="abs mono" style="left:68px;top:105px;color:#000">IT1516</div>
<div class="abs mono" style="left:68px;top:121px;color:#000">IT1516Plus</div>
<div class="abs mono" style="left:68px;top:137px;color:#000">IT1517</div>
<div class="abs mono" style="left:68px;top:153px;color:#000">IT1518</div>
<div class="abs mono" style="left:68px;top:169px;color:#000">IT1550</div>
<div class="abs mono" style="left:68px;top:185px;color:#000">IT1551</div>
<div class="abs mono" style="left:68px;top:201px;color:#000">IT1553</div>
<div class="abs mono" style="left:68px;top:217px;color:#000">IT1556</div>
<div class="abs mono" style="left:68px;top:233px;color:#000">IT1700</div>
<div class="abs mono" style="left:68px;top:249px;color:#000">IT1701</div>
<div class="abs mono" style="left:68px;top:265px;color:#000">IT1702</div>
<div class="abs mono" style="left:68px;top:281px;color:#000">IT1702B</div>
<div class="abs mono" style="left:68px;top:297px;color:#000">IT1703</div>
<div class="abs mono" style="left:68px;top:313px;color:#000">IT2020</div>
<div class="abs mono" style="left:68px;top:329px;color:#000">IT2060</div>
<div class="abs mono" style="left:68px;top:345px;color:#000">IT2080</div>
<div class="abs mono" style="left:68px;top:361px;color:#000">IT2090</div>
<div class="abs mono" style="left:68px;top:377px;color:#000">IT2110</div>
<div class="abs mono" style="left:68px;top:393px;color:#000">IT2120</div>
<div class="abs mono" style="left:68px;top:409px;color:#000">IT2130</div>
<div class="abs mono" style="left:68px;top:425px;color:#000">IT2131</div>
<div class="abs mono" style="left:68px;top:441px;color:#000">IT2150</div>
<div class="abs mono" style="left:68px;top:457px;color:#000">IT2160</div>
<div class="abs mono" style="left:68px;top:473px;color:#000">IT2161</div>
<div class="abs mono" style="left:68px;top:489px;color:#000">IT2162</div>
<div class="abs mono" style="left:68px;top:505px;color:#000">IT2171</div>
<div class="abs mono" style="left:68px;top:521px;color:#000">IT2172</div>
<div class="abs mono" style="left:68px;top:537px;color:#000">IT2173</div>
<div class="abs mono" style="left:68px;top:553px;color:#000">IT2175</div>
<div class="abs mono" style="left:68px;top:569px;color:#000">IT2180</div>
<div class="abs mono" style="left:68px;top:585px;color:#000">IT2190</div>
<div class="abs mono" style="left:68px;top:601px;color:#000">IT2191</div>
<div class="abs mono" style="left:68px;top:617px;color:#000">IT2320</div>
<div class="abs mono" style="left:68px;top:633px;color:#000">IT2550</div>
<div class="abs mono" style="left:68px;top:649px;color:#000">IT2560</div>
<div class="abs" style="left:87px;top:664px;width:124px;height:16px;background:#3399ff;border:1px dotted #000"></div>
<div class="abs mono" style="left:88px;top:665px;color:#fff">IT2560_V1.1_Main_sch</div>
<div class="abs mono" style="left:88px;top:681px;color:#000">IT2560_V1.1_Placement</div>
<div class="abs" style="left:0;top:699px;width:258px;height:4px;background:#fff"></div>
<div class="abs" style="left:235px;top:8px;width:17px;height:691px;background:#fff;border-left:1px solid #c8c8c8;border-right:1px solid #c8c8c8"></div>
<div class="abs" style="left:235px;top:8px;width:17px;height:17px;border:1px solid #c8c8c8;background:#fff"></div>
<svg class="abs" style="left:235px;top:8px" width="18" height="17"><path d="M5 10.5 L9 6.5 L13 10.5" stroke="#404040" stroke-width="1.3" fill="none"/></svg>
<div class="abs" style="left:235px;top:682px;width:17px;height:17px;border:1px solid #c8c8c8;background:#fff"></div>
<svg class="abs" style="left:235px;top:682px" width="18" height="17"><path d="M5 6.5 L9 10.5 L13 6.5" stroke="#404040" stroke-width="1.3" fill="none"/></svg>
<div class="abs" style="left:236px;top:237px;width:16px;height:104px;background:#dadada;border-top:1px solid #b8b8b8;border-bottom:1px solid #b8b8b8"></div>
<div class="abs" style="left:240px;top:286px;width:7px;height:1.5px;background:#606060;box-shadow:0 2.5px 0 #606060,0 5px 0 #606060"></div>
<div class="abs" style="left:103px;top:0;width:160px;height:1px;background:#a8acb4"></div>
</div>
<div class="abs" style="left:253px;top:133px;width:8px;height:703px;background:linear-gradient(90deg,#f4f6f8,#e8ecef)"></div>
<svg class="abs" style="left:253px;top:489px" width="9" height="12"><path d="M1.5 1 L5.5 5 L1.5 9 Z" fill="#d02020"/></svg><div id="tool" class="abs">
 <div class="abs" style="left:0;top:0;width:1px;height:28px;background:#a0a0a0"></div>
 <svg class="abs" style="left:0;top:0" width="620" height="28" viewBox="261 133 620 28">
  <defs>
   <linearGradient id="tbdoc" x1="0" y1="0" x2="0" y2="1"><stop offset="0" stop-color="#e8f4ff"/><stop offset="1" stop-color="#a8c8e8"/></linearGradient>
   <linearGradient id="yel" x1="0" y1="0" x2="1" y2="1"><stop offset="0" stop-color="#f8e8a0"/><stop offset="1" stop-color="#e0b840"/></linearGradient>
   <radialGradient id="zc" cx="0.5" cy="0.35" r="0.6"><stop offset="0" stop-color="#e8f4ff"/><stop offset="1" stop-color="#98c4ec"/></radialGradient>
  </defs>
  <!-- icon1 folder+doc -->
  <path d="M269.5 140.5 h8 v14 h-8 z" fill="#e8c870" stroke="#c8a050"/>
  <path d="M274.5 142.5 h6 l2 2 v10 h-8 z" fill="#fafafa" stroke="#808890"/>
  <path d="M276 146h5M276 148h5M276 150h4" stroke="#a0a8b0"/>
  <!-- icon2 -->
  <path d="M292.5 141.5 h7 l1.5 1.5 v6.5 h-8.5 z" fill="url(#tbdoc)" stroke="#5a7090"/>
  <path d="M298.5 147.5 h7 v7 h-7 z" fill="#fafafa" stroke="#b0b0b0"/>
  <path d="M303 141.5 h2 v3" stroke="#000" stroke-width="1.2" fill="none"/><path d="M303.5 144 l1.8 1.8 l1.8 -1.8z" fill="#000"/>
  <!-- icon3 -->
  <path d="M322.5 141.5 h7 l1.5 1.5 v6.5 h-8.5 z" fill="url(#tbdoc)" stroke="#5a7090"/>
  <path d="M316.5 147.5 h7 v7 h-7 z" fill="#fafafa" stroke="#b0b0b0"/>
  <path d="M320 141.5 h-2 v3" stroke="#000" stroke-width="1.2" fill="none"/><path d="M316 144 l1.8 1.8 l1.8 -1.8z" fill="#000"/>
  <line x1="336.5" y1="137" x2="336.5" y2="159" stroke="#a8a8a8"/>
  <!-- prev/next -->
  <path d="M474.5 140.5 V155.5 L464.5 148 Z" fill="url(#yel)" stroke="#b89a48"/>
  <path d="M491.5 140.5 V155.5 L501.5 148 Z" fill="url(#yel)" stroke="#b89a48"/>
  <!-- fit width -->
  <rect x="513.5" y="140.5" width="11" height="15" fill="#eef6ff" stroke="#4a70a0"/>
  <path d="M518 145 l-3 3 l3 3z M520 145 l3 3 l-3 3z" fill="#2a5a98"/>
  <!-- fit page -->
  <rect x="536.5" y="140.5" width="13" height="15" fill="#eef6ff" stroke="#4a70a0"/>
  <path d="M543 143 l-2 2h4z M543 153 l-2 -2h4z M538.5 148 l2 -2v4z M547.5 148 l-2 -2v4z" fill="#2a5a98"/>
  <!-- zoom out/in -->
  <circle cx="567" cy="148" r="7.5" fill="url(#zc)" stroke="#7a8a9a"/>
  <rect x="562" y="147" width="10" height="2.4" fill="#1a5aa8"/>
  <circle cx="591" cy="148" r="7.5" fill="url(#zc)" stroke="#7a8a9a"/>
  <rect x="586" y="147" width="10" height="2.4" fill="#1a5aa8"/><rect x="589.8" y="143" width="2.4" height="10" fill="#1a5aa8"/>
  <line x1="603.5" y1="137" x2="603.5" y2="159" stroke="#a8a8a8"/>
  <!-- find buttons -->
  <path d="M812 141 h3 v6 l8 -6 h4 v15 h-4 l-8 -6 v6 h-3 z" fill="#a8a8a8"/>
  <path d="M852 141 h-3 v6 l-8 -6 h-4 v15 h4 l8 -6 v6 h3 z" fill="#a8a8a8"/>
  <text x="860" y="156" font-size="14" fill="#7a6ad8" font-family="Liberation Sans">A</text>
  <text x="868" y="149" font-size="10" font-weight="bold" fill="#d040a0" font-family="Liberation Sans">a</text>
 </svg>
 <div class="abs" style="left:85px;top:7px;font-size:13px;color:#000">Page:</div>
 <div class="abs" style="left:123px;top:4px;width:39px;height:20px;background:#fff;border-top:1px solid #a0a0a0;border-left:1px solid #b0b0b0"></div>
 <div class="abs" style="left:123px;top:7px;width:36px;text-align:right;font-size:13px;color:#000">2</div>
 <div class="abs" style="left:167px;top:7px;font-size:13px;color:#000">/ 17</div>
 <div class="abs" style="left:352px;top:7px;font-size:13px;color:#000">Find:</div>
 <div class="abs" style="left:385px;top:5px;width:160px;height:20px;background:#fff;border-top:1px solid #a8a8a8;border-left:1px solid #a8a8a8"></div>
</div>
<div id="viewer" class="abs"></div>
<div id="vscroll" class="abs">
 <div class="abs" style="left:0;top:0;width:15px;height:17px;border-bottom:1px solid #e0e0e0"></div>
 <svg class="abs" style="left:1px;top:3px" width="15" height="15"><path d="M3.5 9.5 L7.5 5.5 L11.5 9.5" stroke="#404040" stroke-width="1.3" fill="none"/></svg>
 <div class="abs" style="left:0;top:55px;width:15px;height:37px;background:#dadada;border-top:1px solid #c8c8c8;border-bottom:1px solid #c8c8c8"></div>
 <div class="abs" style="left:5px;top:70px;width:7px;height:1.3px;background:#555;box-shadow:0 2.6px 0 #555,0 5.2px 0 #555"></div>
 <div class="abs" style="left:0;top:659px;width:15px;height:14px;border-top:1px solid #d0d0d0"></div>
 <svg class="abs" style="left:1px;top:660px" width="15" height="15"><path d="M3.5 5.5 L7.5 9.5 L11.5 5.5" stroke="#404040" stroke-width="1.3" fill="none"/></svg>
</div>
<div class="abs" style="left:262px;top:834px;width:1258px;height:2px;background:#e8eef4"></div>
<div id="status" class="abs">
 <div class="abs mono" style="left:0;top:5px;color:#fff">Version:1.0.0.52</div>
 <div class="abs mono" style="right:2px;top:5px;color:#fff">Current [IT2560_V1.1_Main_sch]</div>
</div>
<svg class="abs" style="left:408px;top:163px" width="950" height="671" viewBox="408 163 950 671">
<rect x="408" y="163" width="950" height="671" fill="#fff"/>
<line x1="434" y1="190.5" x2="1331.5" y2="190.5" stroke="#8a8a8a" stroke-width="1" />
<line x1="438.5" y1="190" x2="438.5" y2="819.5" stroke="#8a8a8a" stroke-width="1" />
<line x1="1331.5" y1="190" x2="1331.5" y2="819.5" stroke="#8a8a8a" stroke-width="1" />
<line x1="438" y1="819.5" x2="1332" y2="819.5" stroke="#7a7a7a" stroke-width="1" />
<line x1="585.5" y1="176" x2="585.5" y2="190" stroke="#909090" stroke-width="1" />
<line x1="733.5" y1="176" x2="733.5" y2="190" stroke="#909090" stroke-width="1" />
<line x1="883.5" y1="176" x2="883.5" y2="190" stroke="#909090" stroke-width="1" />
<line x1="1031.5" y1="176" x2="1031.5" y2="190" stroke="#909090" stroke-width="1" />
<line x1="1179.5" y1="176" x2="1179.5" y2="190" stroke="#909090" stroke-width="1" />
<text x="510.5" y="188" font-size="6.5" fill="#444" font-family="Liberation Serif" >6</text>
<text x="660.5" y="188" font-size="6.5" fill="#444" font-family="Liberation Serif" >5</text>
<text x="807.5" y="188" font-size="6.5" fill="#444" font-family="Liberation Serif" >4</text>
<text x="956.5" y="188" font-size="6.5" fill="#444" font-family="Liberation Serif" >3</text>
<text x="1104.0" y="188" font-size="6.5" fill="#444" font-family="Liberation Serif" >2</text>
<text x="1255.0" y="188" font-size="6.5" fill="#444" font-family="Liberation Serif" >1</text>
<line x1="424" y1="345.5" x2="438" y2="345.5" stroke="#909090" stroke-width="1" />
<line x1="1332" y1="345.5" x2="1346" y2="345.5" stroke="#909090" stroke-width="1" />
<line x1="424" y1="503.5" x2="438" y2="503.5" stroke="#909090" stroke-width="1" />
<line x1="1332" y1="503.5" x2="1346" y2="503.5" stroke="#909090" stroke-width="1" />
<line x1="424" y1="661.5" x2="438" y2="661.5" stroke="#909090" stroke-width="1" />
<line x1="1332" y1="661.5" x2="1346" y2="661.5" stroke="#909090" stroke-width="1" />
<text x="430.5" y="266.5" font-size="6.5" fill="#444" font-family="Liberation Serif" >D</text>
<text x="1334" y="266.5" font-size="6.5" fill="#444" font-family="Liberation Serif" >D</text>
<text x="430.5" y="424.5" font-size="6.5" fill="#444" font-family="Liberation Serif" >C</text>
<text x="1334" y="424.5" font-size="6.5" fill="#444" font-family="Liberation Serif" >C</text>
<text x="430.5" y="582.5" font-size="6.5" fill="#444" font-family="Liberation Serif" >B</text>
<text x="1334" y="582.5" font-size="6.5" fill="#444" font-family="Liberation Serif" >B</text>
<text x="430.5" y="740.5" font-size="6.5" fill="#444" font-family="Liberation Serif" >A</text>
<text x="1334" y="740.5" font-size="6.5" fill="#444" font-family="Liberation Serif" >A</text>
<rect x="1232.5" y="190.5" width="99.0" height="34.5" fill="none" stroke="#505050" stroke-width="1"/>
<line x1="1232.5" y1="196.5" x2="1331.5" y2="196.5" stroke="#606060" stroke-width="0.9" />
<line x1="1232.5" y1="202.5" x2="1331.5" y2="202.5" stroke="#606060" stroke-width="0.9" />
<line x1="1232.5" y1="208.5" x2="1331.5" y2="208.5" stroke="#606060" stroke-width="0.9" />
<line x1="1232.5" y1="214.5" x2="1331.5" y2="214.5" stroke="#606060" stroke-width="0.9" />
<line x1="1232.5" y1="219.5" x2="1331.5" y2="219.5" stroke="#606060" stroke-width="0.9" />
<line x1="1248.5" y1="196.5" x2="1248.5" y2="225" stroke="#606060" stroke-width="0.9" />
<line x1="1291.5" y1="196.5" x2="1291.5" y2="225" stroke="#606060" stroke-width="0.9" />
<line x1="1317.5" y1="196.5" x2="1317.5" y2="225" stroke="#606060" stroke-width="0.9" />
<text x="1270.0" y="194.4" font-size="2.60" fill="#707070" font-family="Liberation Sans" textLength="22.0" lengthAdjust="spacingAndGlyphs">P6P6FR4PC7</text>
<text x="1237.0" y="200.4" font-size="2.60" fill="#808080" font-family="Liberation Sans" textLength="6.0" lengthAdjust="spacingAndGlyphs">1V9</text>
<text x="1264.0" y="200.4" font-size="2.60" fill="#808080" font-family="Liberation Sans" textLength="10.0" lengthAdjust="spacingAndGlyphs">PVV_B</text>
<text x="1297.0" y="200.4" font-size="2.60" fill="#808080" font-family="Liberation Sans" textLength="13.0" lengthAdjust="spacingAndGlyphs">BH3PGW</text>
<text x="1320.0" y="200.4" font-size="2.60" fill="#808080" font-family="Liberation Sans" textLength="7.0" lengthAdjust="spacingAndGlyphs">K0_</text>
<rect x="459.5" y="217.5" width="524" height="580" fill="none" stroke="#8a8a8a" stroke-width="0.8" stroke-dasharray="2 1.5"/>
<text x="513" y="249.8" font-size="18.5" fill="#000" font-family="Liberation Sans" textLength="29" lengthAdjust="spacingAndGlyphs" stroke="#000" stroke-width="0.35">DBB</text>
<text x="722.0" y="266.4" font-size="2.60" fill="#7a7a7a" font-family="Liberation Sans" textLength="8.0" lengthAdjust="spacingAndGlyphs">WT5_</text>
<text x="714.0" y="270.9" font-size="2.60" fill="#7a7a7a" font-family="Liberation Sans" textLength="24.0" lengthAdjust="spacingAndGlyphs">IHA_N_C6G8_</text>
<path d="M643.5,691.5 V277 Q643.5,272.5 648,272.5 H805 Q809.8,272.5 809.8,277 V686 Q809.8,691.5 804,691.5 H649 Z" fill="none" stroke="#7a7a7a" stroke-width="1"/>
<path d="M643.5,277.5 H712 L718.5,284 V679 L712,685.5 H643.5" fill="none" stroke="#7a7a7a" stroke-width="1"/>
<path d="M809.8,277.5 H742 L735.5,284 V490.5 L729.5,496 V507.5 L735.5,513 V679 L742,685.5 H809.8" fill="none" stroke="#7a7a7a" stroke-width="1"/>
<line x1="643.5" y1="329.5" x2="718.5" y2="329.5" stroke="#7a7a7a" stroke-width="1.0" />
<line x1="643.5" y1="432.5" x2="718.5" y2="432.5" stroke="#7a7a7a" stroke-width="1.0" />
<line x1="643.5" y1="536" x2="718.5" y2="536" stroke="#7a7a7a" stroke-width="1.0" />
<line x1="643.5" y1="590.5" x2="718.5" y2="590.5" stroke="#7a7a7a" stroke-width="1.0" />
<line x1="735.5" y1="318.5" x2="809.8" y2="318.5" stroke="#505050" stroke-width="1.2" />
<line x1="735.5" y1="352.5" x2="809.8" y2="352.5" stroke="#505050" stroke-width="1.2" />
<line x1="735.5" y1="381.5" x2="809.8" y2="381.5" stroke="#505050" stroke-width="1.2" />
<line x1="735.5" y1="415.5" x2="809.8" y2="415.5" stroke="#505050" stroke-width="1.2" />
<line x1="735.5" y1="444.5" x2="809.8" y2="444.5" stroke="#505050" stroke-width="1.2" />
<line x1="735.5" y1="467.5" x2="809.8" y2="467.5" stroke="#505050" stroke-width="1.2" />
<line x1="735.5" y1="490.5" x2="809.8" y2="490.5" stroke="#505050" stroke-width="1.2" />
<line x1="735.5" y1="513" x2="809.8" y2="513" stroke="#505050" stroke-width="1.2" />
<line x1="735.5" y1="550.5" x2="809.8" y2="550.5" stroke="#505050" stroke-width="1.2" />
<line x1="735.5" y1="593.5" x2="809.8" y2="593.5" stroke="#505050" stroke-width="1.2" />
<line x1="735.5" y1="602.5" x2="809.8" y2="602.5" stroke="#505050" stroke-width="1.2" />
<line x1="735.5" y1="659.5" x2="809.8" y2="659.5" stroke="#505050" stroke-width="1.2" />
<text x="710.5" y="305" font-size="7.3" fill="#1a1a1a" font-family="Liberation Serif" transform="rotate(-90 710.5 305)" text-anchor="middle" textLength="25" lengthAdjust="spacingAndGlyphs">SPIFLASH</text>
<rect x="714.8" y="301.5" width="1.1" height="7" fill="#c4c4c4"/>
<text x="710.5" y="399.5" font-size="7.3" fill="#1a1a1a" font-family="Liberation Serif" transform="rotate(-90 710.5 399.5)" text-anchor="middle" textLength="15" lengthAdjust="spacingAndGlyphs">CCIR</text>
<rect x="714.8" y="396.0" width="1.1" height="7" fill="#c4c4c4"/>
<text x="710.5" y="479" font-size="7.3" fill="#1a1a1a" font-family="Liberation Serif" transform="rotate(-90 710.5 479)" text-anchor="middle" textLength="11" lengthAdjust="spacingAndGlyphs">LCM</text>
<rect x="714.8" y="475.5" width="1.1" height="7" fill="#c4c4c4"/>
<text x="713.5" y="562" font-size="7.3" fill="#1a1a1a" font-family="Liberation Serif" transform="rotate(-90 713.5 562)" text-anchor="middle" textLength="14" lengthAdjust="spacingAndGlyphs">GPIO</text>
<rect x="717.8" y="558.5" width="1.1" height="7" fill="#c4c4c4"/>
<text x="713.5" y="635" font-size="7.3" fill="#1a1a1a" font-family="Liberation Serif" transform="rotate(-90 713.5 635)" text-anchor="middle" textLength="22" lengthAdjust="spacingAndGlyphs">KEYPAD</text>
<rect x="717.8" y="631.5" width="1.1" height="7" fill="#c4c4c4"/>
<text x="729.5" y="470" font-size="9.5" fill="#222" font-family="Liberation Serif" transform="rotate(-90 729.5 470)" text-anchor="middle" textLength="31" lengthAdjust="spacingAndGlyphs">DIGITAL</text>
<text x="743.0" y="301" font-size="7.2" fill="#1a1a1a" font-family="Liberation Serif" transform="rotate(-90 743.0 301)" text-anchor="middle" textLength="22" lengthAdjust="spacingAndGlyphs">RF_CTRL</text>
<rect x="746.0" y="297.5" width="1.1" height="7" fill="#c4c4c4"/>
<text x="743.0" y="326" font-size="7.2" fill="#1a1a1a" font-family="Liberation Serif" transform="rotate(-90 743.0 326)" text-anchor="middle" textLength="14" lengthAdjust="spacingAndGlyphs">JTAG</text>
<rect x="746.0" y="322.5" width="1.1" height="7" fill="#c4c4c4"/>
<text x="743.0" y="371.5" font-size="7.2" fill="#1a1a1a" font-family="Liberation Serif" transform="rotate(-90 743.0 371.5)" text-anchor="middle" textLength="14" lengthAdjust="spacingAndGlyphs">UART</text>
<rect x="746.0" y="368.0" width="1.1" height="7" fill="#c4c4c4"/>
<text x="743.0" y="396.5" font-size="7.2" fill="#1a1a1a" font-family="Liberation Serif" transform="rotate(-90 743.0 396.5)" text-anchor="middle" textLength="9" lengthAdjust="spacingAndGlyphs">IIS</text>
<rect x="746.0" y="393.0" width="1.1" height="7" fill="#c4c4c4"/>
<text x="743.0" y="429" font-size="7.2" fill="#1a1a1a" font-family="Liberation Serif" transform="rotate(-90 743.0 429)" text-anchor="middle" textLength="7" lengthAdjust="spacingAndGlyphs">TP</text>
<rect x="746.0" y="425.5" width="1.1" height="7" fill="#c4c4c4"/>
<text x="743.0" y="456" font-size="7.2" fill="#1a1a1a" font-family="Liberation Serif" transform="rotate(-90 743.0 456)" text-anchor="middle" textLength="17" lengthAdjust="spacingAndGlyphs">SDIO0</text>
<rect x="746.0" y="452.5" width="1.1" height="7" fill="#c4c4c4"/>
<text x="743.0" y="479" font-size="7.2" fill="#1a1a1a" font-family="Liberation Serif" transform="rotate(-90 743.0 479)" text-anchor="middle" textLength="11" lengthAdjust="spacingAndGlyphs">SD1</text>
<rect x="746.0" y="475.5" width="1.1" height="7" fill="#c4c4c4"/>
<text x="736.5" y="502" font-size="7.2" fill="#1a1a1a" font-family="Liberation Serif" transform="rotate(-90 736.5 502)" text-anchor="middle" textLength="13" lengthAdjust="spacingAndGlyphs">SDIO2</text>
<rect x="739.5" y="498.5" width="1.1" height="7" fill="#c4c4c4"/>
<text x="743.0" y="532" font-size="7.2" fill="#1a1a1a" font-family="Liberation Serif" transform="rotate(-90 743.0 532)" text-anchor="middle" textLength="9" lengthAdjust="spacingAndGlyphs">SPI</text>
<rect x="746.0" y="528.5" width="1.1" height="7" fill="#c4c4c4"/>
<text x="743.0" y="570" font-size="7.2" fill="#1a1a1a" font-family="Liberation Serif" transform="rotate(-90 743.0 570)" text-anchor="middle" textLength="13" lengthAdjust="spacingAndGlyphs">SDIO</text>
<rect x="746.0" y="566.5" width="1.1" height="7" fill="#c4c4c4"/>
<text x="743.0" y="632" font-size="7.2" fill="#1a1a1a" font-family="Liberation Serif" transform="rotate(-90 743.0 632)" text-anchor="middle" textLength="22" lengthAdjust="spacingAndGlyphs">SYSTEM</text>
<rect x="746.0" y="628.5" width="1.1" height="7" fill="#c4c4c4"/>
<text x="742.5" y="673" font-size="7.8" fill="#1a1a1a" font-family="Liberation Serif" transform="rotate(-90 742.5 673)" text-anchor="middle" textLength="10" lengthAdjust="spacingAndGlyphs">CLK</text>
<text x="749.5" y="673" font-size="7.8" fill="#1a1a1a" font-family="Liberation Serif" transform="rotate(-90 749.5 673)" text-anchor="middle" textLength="12" lengthAdjust="spacingAndGlyphs">PWM</text>
<rect x="752.5" y="669" width="1.1" height="8" fill="#b8b8b8"/>
<text x="645.5" y="284.1" font-size="2.89" fill="#858585" font-family="Liberation Sans" textLength="9.5" lengthAdjust="spacingAndGlyphs">1CGI</text>
<text x="637.0" y="282.0" font-size="2.60" fill="#959595" font-family="Liberation Sans" textLength="5.5" lengthAdjust="spacingAndGlyphs">L_</text>
<line x1="607" y1="283.4" x2="643.5" y2="283.4" stroke="#a0a0a0" stroke-width="0.9" />
<rect x="601.5" y="281.8" width="5.5" height="3.2" fill="none" stroke="#a0a0a0" stroke-width="0.7"/>
<text x="588.3" y="284.1" font-size="2.72" fill="#858585" font-family="Liberation Sans" textLength="10.7" lengthAdjust="spacingAndGlyphs">98_D_</text>
<text x="583.0" y="283.7" font-size="2.60" fill="#a8a8a8" font-family="Liberation Sans" textLength="4.0" lengthAdjust="spacingAndGlyphs">FG</text>
<text x="645.5" y="289.9" font-size="2.89" fill="#858585" font-family="Liberation Sans" textLength="9.8" lengthAdjust="spacingAndGlyphs">G3_D</text>
<text x="637.0" y="287.8" font-size="2.60" fill="#959595" font-family="Liberation Sans" textLength="5.5" lengthAdjust="spacingAndGlyphs">NG</text>
<text x="645.5" y="298.6" font-size="2.89" fill="#858585" font-family="Liberation Sans" textLength="8.0" lengthAdjust="spacingAndGlyphs">647_</text>
<text x="637.0" y="296.5" font-size="2.60" fill="#959595" font-family="Liberation Sans" textLength="5.5" lengthAdjust="spacingAndGlyphs">F6</text>
<line x1="607" y1="297.9" x2="643.5" y2="297.9" stroke="#a0a0a0" stroke-width="0.9" />
<rect x="601.5" y="296.3" width="5.5" height="3.2" fill="none" stroke="#a0a0a0" stroke-width="0.7"/>
<text x="586.2" y="298.6" font-size="2.72" fill="#858585" font-family="Liberation Sans" textLength="12.8" lengthAdjust="spacingAndGlyphs">U_GALN</text>
<text x="583.0" y="298.2" font-size="2.60" fill="#a8a8a8" font-family="Liberation Sans" textLength="3.0" lengthAdjust="spacingAndGlyphs">G</text>
<text x="645.5" y="304.2" font-size="2.89" fill="#858585" font-family="Liberation Sans" textLength="10.3" lengthAdjust="spacingAndGlyphs">H_V95</text>
<text x="637.0" y="302.1" font-size="2.60" fill="#959595" font-family="Liberation Sans" textLength="5.5" lengthAdjust="spacingAndGlyphs">U_</text>
<line x1="607" y1="303.5" x2="643.5" y2="303.5" stroke="#a0a0a0" stroke-width="0.9" />
<rect x="601.5" y="301.9" width="5.5" height="3.2" fill="none" stroke="#a0a0a0" stroke-width="0.7"/>
<text x="587.9" y="304.2" font-size="2.72" fill="#858585" font-family="Liberation Sans" textLength="11.1" lengthAdjust="spacingAndGlyphs">W_522</text>
<text x="583.0" y="303.8" font-size="2.60" fill="#a8a8a8" font-family="Liberation Sans" textLength="6.0" lengthAdjust="spacingAndGlyphs">GNV</text>
<text x="645.5" y="310.1" font-size="2.89" fill="#858585" font-family="Liberation Sans" textLength="8.3" lengthAdjust="spacingAndGlyphs">B__H</text>
<text x="637.0" y="308.0" font-size="2.60" fill="#959595" font-family="Liberation Sans" textLength="5.5" lengthAdjust="spacingAndGlyphs">2I</text>
<line x1="607" y1="309.4" x2="643.5" y2="309.4" stroke="#a0a0a0" stroke-width="0.9" />
<rect x="601.5" y="307.8" width="5.5" height="3.2" fill="none" stroke="#a0a0a0" stroke-width="0.7"/>
<text x="587.6" y="310.1" font-size="2.72" fill="#858585" font-family="Liberation Sans" textLength="11.4" lengthAdjust="spacingAndGlyphs">7K8C_</text>
<text x="583.0" y="309.7" font-size="2.60" fill="#a8a8a8" font-family="Liberation Sans" textLength="6.0" lengthAdjust="spacingAndGlyphs">6C8</text>
<text x="645.5" y="316.0" font-size="2.89" fill="#858585" font-family="Liberation Sans" textLength="11.7" lengthAdjust="spacingAndGlyphs">2_PB_</text>
<text x="637.0" y="313.9" font-size="2.60" fill="#959595" font-family="Liberation Sans" textLength="5.5" lengthAdjust="spacingAndGlyphs">ME</text>
<line x1="607" y1="315.3" x2="643.5" y2="315.3" stroke="#a0a0a0" stroke-width="0.9" />
<rect x="601.5" y="313.7" width="5.5" height="3.2" fill="none" stroke="#a0a0a0" stroke-width="0.7"/>
<text x="590.3" y="316.0" font-size="2.72" fill="#858585" font-family="Liberation Sans" textLength="8.7" lengthAdjust="spacingAndGlyphs">EL19</text>
<text x="583.0" y="315.6" font-size="2.60" fill="#a8a8a8" font-family="Liberation Sans" textLength="3.0" lengthAdjust="spacingAndGlyphs">8</text>
<text x="645.5" y="324.3" font-size="2.89" fill="#858585" font-family="Liberation Sans" textLength="8.1" lengthAdjust="spacingAndGlyphs">8KAC</text>
<text x="637.0" y="322.2" font-size="2.60" fill="#959595" font-family="Liberation Sans" textLength="5.5" lengthAdjust="spacingAndGlyphs">R_</text>
<line x1="607" y1="323.6" x2="643.5" y2="323.6" stroke="#a0a0a0" stroke-width="0.9" />
<rect x="601.5" y="322.0" width="5.5" height="3.2" fill="none" stroke="#a0a0a0" stroke-width="0.7"/>
<text x="588.5" y="324.3" font-size="2.72" fill="#858585" font-family="Liberation Sans" textLength="10.5" lengthAdjust="spacingAndGlyphs">ECM72</text>
<text x="583.0" y="323.9" font-size="2.60" fill="#a8a8a8" font-family="Liberation Sans" textLength="4.0" lengthAdjust="spacingAndGlyphs">M_</text>
<text x="645.5" y="336.0" font-size="2.89" fill="#858585" font-family="Liberation Sans" textLength="23.7" lengthAdjust="spacingAndGlyphs">COAU_NV___O</text>
<text x="637.0" y="333.9" font-size="2.60" fill="#959595" font-family="Liberation Sans" textLength="5.5" lengthAdjust="spacingAndGlyphs">28</text>
<line x1="607" y1="335.3" x2="643.5" y2="335.3" stroke="#a0a0a0" stroke-width="0.9" />
<rect x="601.5" y="333.7" width="5.5" height="3.2" fill="none" stroke="#a0a0a0" stroke-width="0.7"/>
<text x="585.1" y="336.0" font-size="2.72" fill="#858585" font-family="Liberation Sans" textLength="13.9" lengthAdjust="spacingAndGlyphs">UPCS_R</text>
<text x="583.0" y="335.6" font-size="2.60" fill="#a8a8a8" font-family="Liberation Sans" textLength="6.0" lengthAdjust="spacingAndGlyphs">DVR</text>
<text x="645.5" y="341.8" font-size="2.89" fill="#858585" font-family="Liberation Sans" textLength="21.1" lengthAdjust="spacingAndGlyphs">AEG30RLIO3</text>
<text x="637.0" y="339.7" font-size="2.60" fill="#959595" font-family="Liberation Sans" textLength="5.5" lengthAdjust="spacingAndGlyphs">8G</text>
<line x1="607" y1="341.1" x2="643.5" y2="341.1" stroke="#a0a0a0" stroke-width="0.9" />
<rect x="601.5" y="339.5" width="5.5" height="3.2" fill="none" stroke="#a0a0a0" stroke-width="0.7"/>
<text x="587.9" y="341.8" font-size="2.72" fill="#858585" font-family="Liberation Sans" textLength="11.1" lengthAdjust="spacingAndGlyphs">UG_5B</text>
<text x="583.0" y="341.4" font-size="2.60" fill="#a8a8a8" font-family="Liberation Sans" textLength="4.0" lengthAdjust="spacingAndGlyphs">5_</text>
<text x="645.5" y="347.6" font-size="2.89" fill="#858585" font-family="Liberation Sans" textLength="23.4" lengthAdjust="spacingAndGlyphs">I5W05VCIBIK</text>
<text x="637.0" y="345.5" font-size="2.60" fill="#959595" font-family="Liberation Sans" textLength="5.5" lengthAdjust="spacingAndGlyphs">WA</text>
<line x1="607" y1="346.9" x2="643.5" y2="346.9" stroke="#a0a0a0" stroke-width="0.9" />
<rect x="601.5" y="345.3" width="5.5" height="3.2" fill="none" stroke="#a0a0a0" stroke-width="0.7"/>
<text x="585.9" y="347.6" font-size="2.72" fill="#858585" font-family="Liberation Sans" textLength="13.1" lengthAdjust="spacingAndGlyphs">NAIEW_</text>
<text x="583.0" y="347.2" font-size="2.60" fill="#a8a8a8" font-family="Liberation Sans" textLength="6.0" lengthAdjust="spacingAndGlyphs">WM0</text>
<text x="645.5" y="353.2" font-size="2.89" fill="#858585" font-family="Liberation Sans" textLength="20.4" lengthAdjust="spacingAndGlyphs">5F31_31S3</text>
<text x="637.0" y="351.1" font-size="2.60" fill="#959595" font-family="Liberation Sans" textLength="5.5" lengthAdjust="spacingAndGlyphs">F4</text>
<line x1="607" y1="352.5" x2="643.5" y2="352.5" stroke="#a0a0a0" stroke-width="0.9" />
<rect x="601.5" y="350.9" width="5.5" height="3.2" fill="none" stroke="#a0a0a0" stroke-width="0.7"/>
<text x="585.4" y="353.2" font-size="2.72" fill="#858585" font-family="Liberation Sans" textLength="13.6" lengthAdjust="spacingAndGlyphs">H_2PWA</text>
<text x="583.0" y="352.8" font-size="2.60" fill="#a8a8a8" font-family="Liberation Sans" textLength="6.0" lengthAdjust="spacingAndGlyphs">W4L</text>
<text x="645.5" y="359.0" font-size="2.89" fill="#858585" font-family="Liberation Sans" textLength="23.6" lengthAdjust="spacingAndGlyphs">WD58GNK4I6_</text>
<text x="637.0" y="356.9" font-size="2.60" fill="#959595" font-family="Liberation Sans" textLength="5.5" lengthAdjust="spacingAndGlyphs">S_</text>
<line x1="607" y1="358.3" x2="643.5" y2="358.3" stroke="#a0a0a0" stroke-width="0.9" />
<rect x="601.5" y="356.7" width="5.5" height="3.2" fill="none" stroke="#a0a0a0" stroke-width="0.7"/>
<text x="587.5" y="359.0" font-size="2.72" fill="#858585" font-family="Liberation Sans" textLength="11.5" lengthAdjust="spacingAndGlyphs">TIA6_</text>
<text x="583.0" y="358.6" font-size="2.60" fill="#a8a8a8" font-family="Liberation Sans" textLength="3.0" lengthAdjust="spacingAndGlyphs">T</text>
<text x="645.5" y="364.7" font-size="2.89" fill="#858585" font-family="Liberation Sans" textLength="22.0" lengthAdjust="spacingAndGlyphs">4R_209UCPK</text>
<text x="637.0" y="362.6" font-size="2.60" fill="#959595" font-family="Liberation Sans" textLength="5.5" lengthAdjust="spacingAndGlyphs">5W</text>
<line x1="607" y1="364.0" x2="643.5" y2="364.0" stroke="#a0a0a0" stroke-width="0.9" />
<rect x="601.5" y="362.4" width="5.5" height="3.2" fill="none" stroke="#a0a0a0" stroke-width="0.7"/>
<text x="589.7" y="364.7" font-size="2.72" fill="#858585" font-family="Liberation Sans" textLength="9.3" lengthAdjust="spacingAndGlyphs">ST06</text>
<text x="645.5" y="370.2" font-size="2.89" fill="#858585" font-family="Liberation Sans" textLength="25.3" lengthAdjust="spacingAndGlyphs">K9IGDVTSTU__</text>
<text x="637.0" y="368.1" font-size="2.60" fill="#959595" font-family="Liberation Sans" textLength="5.5" lengthAdjust="spacingAndGlyphs">F_</text>
<line x1="607" y1="369.5" x2="643.5" y2="369.5" stroke="#a0a0a0" stroke-width="0.9" />
<rect x="601.5" y="367.9" width="5.5" height="3.2" fill="none" stroke="#a0a0a0" stroke-width="0.7"/>
<text x="586.7" y="370.2" font-size="2.72" fill="#858585" font-family="Liberation Sans" textLength="12.3" lengthAdjust="spacingAndGlyphs">O4IR_5</text>
<text x="645.5" y="376.1" font-size="2.89" fill="#858585" font-family="Liberation Sans" textLength="29.0" lengthAdjust="spacingAndGlyphs">SGAEA___2VRDV</text>
<text x="637.0" y="374.0" font-size="2.60" fill="#959595" font-family="Liberation Sans" textLength="5.5" lengthAdjust="spacingAndGlyphs">I1</text>
<line x1="607" y1="375.4" x2="643.5" y2="375.4" stroke="#a0a0a0" stroke-width="0.9" />
<rect x="601.5" y="373.8" width="5.5" height="3.2" fill="none" stroke="#a0a0a0" stroke-width="0.7"/>
<text x="586.8" y="376.1" font-size="2.72" fill="#858585" font-family="Liberation Sans" textLength="12.2" lengthAdjust="spacingAndGlyphs">O_5F6W</text>
<text x="583.0" y="375.7" font-size="2.60" fill="#a8a8a8" font-family="Liberation Sans" textLength="3.0" lengthAdjust="spacingAndGlyphs">6</text>
<text x="645.5" y="385.0" font-size="2.89" fill="#858585" font-family="Liberation Sans" textLength="24.5" lengthAdjust="spacingAndGlyphs">UHW7V837_EI</text>
<text x="637.0" y="382.9" font-size="2.60" fill="#959595" font-family="Liberation Sans" textLength="5.5" lengthAdjust="spacingAndGlyphs">N_</text>
<line x1="607" y1="384.3" x2="643.5" y2="384.3" stroke="#a0a0a0" stroke-width="0.9" />
<rect x="601.5" y="382.7" width="5.5" height="3.2" fill="none" stroke="#a0a0a0" stroke-width="0.7"/>
<text x="584.3" y="385.0" font-size="2.72" fill="#858585" font-family="Liberation Sans" textLength="14.7" lengthAdjust="spacingAndGlyphs">O1_0D05</text>
<text x="645.5" y="390.4" font-size="2.89" fill="#858585" font-family="Liberation Sans" textLength="19.4" lengthAdjust="spacingAndGlyphs">SL04___SR</text>
<text x="637.0" y="388.3" font-size="2.60" fill="#959595" font-family="Liberation Sans" textLength="5.5" lengthAdjust="spacingAndGlyphs">ED</text>
<line x1="607" y1="389.7" x2="643.5" y2="389.7" stroke="#a0a0a0" stroke-width="0.9" />
<rect x="601.5" y="388.1" width="5.5" height="3.2" fill="none" stroke="#a0a0a0" stroke-width="0.7"/>
<text x="589.4" y="390.4" font-size="2.72" fill="#858585" font-family="Liberation Sans" textLength="9.6" lengthAdjust="spacingAndGlyphs">5_0_</text>
<text x="583.0" y="390.0" font-size="2.60" fill="#a8a8a8" font-family="Liberation Sans" textLength="6.0" lengthAdjust="spacingAndGlyphs">P__</text>
<text x="645.5" y="396.2" font-size="2.89" fill="#858585" font-family="Liberation Sans" textLength="22.7" lengthAdjust="spacingAndGlyphs">OOM_6O28F_</text>
<text x="637.0" y="394.1" font-size="2.60" fill="#959595" font-family="Liberation Sans" textLength="5.5" lengthAdjust="spacingAndGlyphs">4_</text>
<line x1="607" y1="395.5" x2="643.5" y2="395.5" stroke="#a0a0a0" stroke-width="0.9" />
<rect x="601.5" y="393.9" width="5.5" height="3.2" fill="none" stroke="#a0a0a0" stroke-width="0.7"/>
<text x="583.9" y="396.2" font-size="2.72" fill="#858585" font-family="Liberation Sans" textLength="15.1" lengthAdjust="spacingAndGlyphs">47WUSLI</text>
<text x="583.0" y="395.8" font-size="2.60" fill="#a8a8a8" font-family="Liberation Sans" textLength="3.0" lengthAdjust="spacingAndGlyphs">2</text>
<text x="645.5" y="402.0" font-size="2.89" fill="#858585" font-family="Liberation Sans" textLength="26.9" lengthAdjust="spacingAndGlyphs">FN_T3F24R_WB</text>
<text x="637.0" y="399.9" font-size="2.60" fill="#959595" font-family="Liberation Sans" textLength="5.5" lengthAdjust="spacingAndGlyphs">H9</text>
<line x1="607" y1="401.3" x2="643.5" y2="401.3" stroke="#a0a0a0" stroke-width="0.9" />
<rect x="601.5" y="399.7" width="5.5" height="3.2" fill="none" stroke="#a0a0a0" stroke-width="0.7"/>
<text x="585.7" y="402.0" font-size="2.72" fill="#858585" font-family="Liberation Sans" textLength="13.3" lengthAdjust="spacingAndGlyphs">LNT_R1</text>
<text x="583.0" y="401.6" font-size="2.60" fill="#a8a8a8" font-family="Liberation Sans" textLength="4.0" lengthAdjust="spacingAndGlyphs">U_</text>
<text x="645.5" y="407.9" font-size="2.89" fill="#858585" font-family="Liberation Sans" textLength="25.4" lengthAdjust="spacingAndGlyphs">2PBWDITOUD4T</text>
<text x="637.0" y="405.8" font-size="2.60" fill="#959595" font-family="Liberation Sans" textLength="5.5" lengthAdjust="spacingAndGlyphs">V9</text>
<line x1="607" y1="407.2" x2="643.5" y2="407.2" stroke="#a0a0a0" stroke-width="0.9" />
<rect x="601.5" y="405.6" width="5.5" height="3.2" fill="none" stroke="#a0a0a0" stroke-width="0.7"/>
<text x="590.6" y="407.9" font-size="2.72" fill="#858585" font-family="Liberation Sans" textLength="8.4" lengthAdjust="spacingAndGlyphs">8NFT</text>
<text x="583.0" y="407.5" font-size="2.60" fill="#a8a8a8" font-family="Liberation Sans" textLength="3.0" lengthAdjust="spacingAndGlyphs">O</text>
<text x="645.5" y="413.5" font-size="2.89" fill="#858585" font-family="Liberation Sans" textLength="29.3" lengthAdjust="spacingAndGlyphs">ONMRT0K_U__N_</text>
<text x="637.0" y="411.4" font-size="2.60" fill="#959595" font-family="Liberation Sans" textLength="5.5" lengthAdjust="spacingAndGlyphs">LB</text>
<line x1="607" y1="412.8" x2="643.5" y2="412.8" stroke="#a0a0a0" stroke-width="0.9" />
<rect x="601.5" y="411.2" width="5.5" height="3.2" fill="none" stroke="#a0a0a0" stroke-width="0.7"/>
<text x="586.3" y="413.5" font-size="2.72" fill="#858585" font-family="Liberation Sans" textLength="12.7" lengthAdjust="spacingAndGlyphs">2CHR3S</text>
<text x="583.0" y="413.1" font-size="2.60" fill="#a8a8a8" font-family="Liberation Sans" textLength="6.0" lengthAdjust="spacingAndGlyphs">89V</text>
<text x="645.5" y="422.0" font-size="2.89" fill="#858585" font-family="Liberation Sans" textLength="26.5" lengthAdjust="spacingAndGlyphs">BP_MDEPWO2E2</text>
<text x="637.0" y="419.9" font-size="2.60" fill="#959595" font-family="Liberation Sans" textLength="5.5" lengthAdjust="spacingAndGlyphs">ED</text>
<line x1="607" y1="421.3" x2="643.5" y2="421.3" stroke="#a0a0a0" stroke-width="0.9" />
<rect x="601.5" y="419.7" width="5.5" height="3.2" fill="none" stroke="#a0a0a0" stroke-width="0.7"/>
<text x="587.0" y="422.0" font-size="2.72" fill="#858585" font-family="Liberation Sans" textLength="12.0" lengthAdjust="spacingAndGlyphs">KVI01</text>
<text x="583.0" y="421.6" font-size="2.60" fill="#a8a8a8" font-family="Liberation Sans" textLength="6.0" lengthAdjust="spacingAndGlyphs">IGS</text>
<text x="645.5" y="427.9" font-size="2.89" fill="#858585" font-family="Liberation Sans" textLength="29.8" lengthAdjust="spacingAndGlyphs">80__O__I__TMML</text>
<text x="637.0" y="425.8" font-size="2.60" fill="#959595" font-family="Liberation Sans" textLength="5.5" lengthAdjust="spacingAndGlyphs">R5</text>
<line x1="607" y1="427.2" x2="643.5" y2="427.2" stroke="#a0a0a0" stroke-width="0.9" />
<rect x="601.5" y="425.6" width="5.5" height="3.2" fill="none" stroke="#a0a0a0" stroke-width="0.7"/>
<text x="584.0" y="427.9" font-size="2.72" fill="#858585" font-family="Liberation Sans" textLength="15.0" lengthAdjust="spacingAndGlyphs">4_V3ONM</text>
<text x="583.0" y="427.5" font-size="2.60" fill="#a8a8a8" font-family="Liberation Sans" textLength="6.0" lengthAdjust="spacingAndGlyphs">L38</text>
<text x="645.5" y="439.2" font-size="2.89" fill="#858585" font-family="Liberation Sans" textLength="33.7" lengthAdjust="spacingAndGlyphs">WDL__RP3_8CR17_</text>
<text x="637.0" y="437.1" font-size="2.60" fill="#959595" font-family="Liberation Sans" textLength="5.5" lengthAdjust="spacingAndGlyphs">ML</text>
<line x1="607" y1="438.5" x2="643.5" y2="438.5" stroke="#a0a0a0" stroke-width="0.9" />
<rect x="601.5" y="436.9" width="5.5" height="3.2" fill="none" stroke="#a0a0a0" stroke-width="0.7"/>
<text x="588.1" y="439.2" font-size="2.72" fill="#858585" font-family="Liberation Sans" textLength="10.9" lengthAdjust="spacingAndGlyphs">DP80P</text>
<text x="583.0" y="438.8" font-size="2.60" fill="#a8a8a8" font-family="Liberation Sans" textLength="4.0" lengthAdjust="spacingAndGlyphs">PN</text>
<text x="645.5" y="447.9" font-size="2.89" fill="#858585" font-family="Liberation Sans" textLength="49.4" lengthAdjust="spacingAndGlyphs">2H_AN4UN5F_74_T_A4U4L_</text>
<text x="637.0" y="445.8" font-size="2.60" fill="#959595" font-family="Liberation Sans" textLength="5.5" lengthAdjust="spacingAndGlyphs">2_</text>
<line x1="607" y1="447.2" x2="643.5" y2="447.2" stroke="#a0a0a0" stroke-width="0.9" />
<rect x="601.5" y="445.6" width="5.5" height="3.2" fill="none" stroke="#a0a0a0" stroke-width="0.7"/>
<text x="588.5" y="447.9" font-size="2.72" fill="#858585" font-family="Liberation Sans" textLength="10.5" lengthAdjust="spacingAndGlyphs">AE_OH</text>
<text x="583.0" y="447.5" font-size="2.60" fill="#a8a8a8" font-family="Liberation Sans" textLength="6.0" lengthAdjust="spacingAndGlyphs">LN4</text>
<text x="645.5" y="453.5" font-size="2.89" fill="#858585" font-family="Liberation Sans" textLength="49.4" lengthAdjust="spacingAndGlyphs">0_41B5M4C9A1__8_WFNK7_</text>
<text x="637.0" y="451.4" font-size="2.60" fill="#959595" font-family="Liberation Sans" textLength="5.5" lengthAdjust="spacingAndGlyphs">KK</text>
<line x1="607" y1="452.8" x2="643.5" y2="452.8" stroke="#a0a0a0" stroke-width="0.9" />
<rect x="601.5" y="451.2" width="5.5" height="3.2" fill="none" stroke="#a0a0a0" stroke-width="0.7"/>
<text x="585.8" y="453.5" font-size="2.72" fill="#858585" font-family="Liberation Sans" textLength="13.2" lengthAdjust="spacingAndGlyphs">38_U4_</text>
<text x="583.0" y="453.1" font-size="2.60" fill="#a8a8a8" font-family="Liberation Sans" textLength="3.0" lengthAdjust="spacingAndGlyphs">M</text>
<text x="645.5" y="459.2" font-size="2.89" fill="#858585" font-family="Liberation Sans" textLength="34.3" lengthAdjust="spacingAndGlyphs">HRH7F8TTINL3RN_4</text>
<text x="637.0" y="457.1" font-size="2.60" fill="#959595" font-family="Liberation Sans" textLength="5.5" lengthAdjust="spacingAndGlyphs">4S</text>
<line x1="607" y1="458.5" x2="643.5" y2="458.5" stroke="#a0a0a0" stroke-width="0.9" />
<rect x="601.5" y="456.9" width="5.5" height="3.2" fill="none" stroke="#a0a0a0" stroke-width="0.7"/>
<text x="584.6" y="459.2" font-size="2.72" fill="#858585" font-family="Liberation Sans" textLength="14.4" lengthAdjust="spacingAndGlyphs">3BH6MHV</text>
<text x="645.5" y="465.0" font-size="2.89" fill="#858585" font-family="Liberation Sans" textLength="38.3" lengthAdjust="spacingAndGlyphs">3I4WVT_F_6__VD19T</text>
<text x="637.0" y="462.9" font-size="2.60" fill="#959595" font-family="Liberation Sans" textLength="5.5" lengthAdjust="spacingAndGlyphs">6A</text>
<text x="645.5" y="470.7" font-size="2.89" fill="#858585" font-family="Liberation Sans" textLength="45.8" lengthAdjust="spacingAndGlyphs">O0_G_R_KN_PC0_09DA1HD</text>
<text x="637.0" y="468.6" font-size="2.60" fill="#959595" font-family="Liberation Sans" textLength="5.5" lengthAdjust="spacingAndGlyphs">P6</text>
<line x1="607" y1="470.0" x2="643.5" y2="470.0" stroke="#a0a0a0" stroke-width="0.9" />
<rect x="601.5" y="468.4" width="5.5" height="3.2" fill="none" stroke="#a0a0a0" stroke-width="0.7"/>
<text x="583.1" y="470.7" font-size="2.72" fill="#858585" font-family="Liberation Sans" textLength="15.9" lengthAdjust="spacingAndGlyphs">47K8K30</text>
<text x="583.0" y="470.3" font-size="2.60" fill="#a8a8a8" font-family="Liberation Sans" textLength="3.0" lengthAdjust="spacingAndGlyphs">G</text>
<text x="645.5" y="476.6" font-size="2.89" fill="#858585" font-family="Liberation Sans" textLength="37.5" lengthAdjust="spacingAndGlyphs">D9RLN___1_BUDFOC5</text>
<text x="637.0" y="474.5" font-size="2.60" fill="#959595" font-family="Liberation Sans" textLength="5.5" lengthAdjust="spacingAndGlyphs">OE</text>
<line x1="607" y1="475.9" x2="643.5" y2="475.9" stroke="#a0a0a0" stroke-width="0.9" />
<rect x="601.5" y="474.3" width="5.5" height="3.2" fill="none" stroke="#a0a0a0" stroke-width="0.7"/>
<text x="585.8" y="476.6" font-size="2.72" fill="#858585" font-family="Liberation Sans" textLength="13.2" lengthAdjust="spacingAndGlyphs">3_RO21</text>
<text x="583.0" y="476.2" font-size="2.60" fill="#a8a8a8" font-family="Liberation Sans" textLength="3.0" lengthAdjust="spacingAndGlyphs">0</text>
<text x="645.5" y="531.2" font-size="2.89" fill="#858585" font-family="Liberation Sans" textLength="39.9" lengthAdjust="spacingAndGlyphs">S_LP_SKVI7HSU8189_</text>
<text x="637.0" y="529.1" font-size="2.60" fill="#959595" font-family="Liberation Sans" textLength="5.5" lengthAdjust="spacingAndGlyphs">0C</text>
<text x="645.5" y="542.2" font-size="2.89" fill="#858585" font-family="Liberation Sans" textLength="15.6" lengthAdjust="spacingAndGlyphs">R1CM7_E</text>
<text x="637.0" y="540.1" font-size="2.60" fill="#959595" font-family="Liberation Sans" textLength="5.5" lengthAdjust="spacingAndGlyphs">HT</text>
<line x1="607" y1="541.5" x2="643.5" y2="541.5" stroke="#a0a0a0" stroke-width="0.9" />
<rect x="601.5" y="539.9" width="5.5" height="3.2" fill="none" stroke="#a0a0a0" stroke-width="0.7"/>
<text x="586.6" y="542.2" font-size="2.72" fill="#858585" font-family="Liberation Sans" textLength="12.4" lengthAdjust="spacingAndGlyphs">CI_7V_</text>
<text x="645.5" y="548.1" font-size="2.89" fill="#858585" font-family="Liberation Sans" textLength="14.0" lengthAdjust="spacingAndGlyphs">0HMF4_</text>
<text x="637.0" y="546.0" font-size="2.60" fill="#959595" font-family="Liberation Sans" textLength="5.5" lengthAdjust="spacingAndGlyphs">B4</text>
<line x1="607" y1="547.4" x2="643.5" y2="547.4" stroke="#a0a0a0" stroke-width="0.9" />
<rect x="601.5" y="545.8" width="5.5" height="3.2" fill="none" stroke="#a0a0a0" stroke-width="0.7"/>
<text x="583.1" y="548.1" font-size="2.72" fill="#858585" font-family="Liberation Sans" textLength="15.9" lengthAdjust="spacingAndGlyphs">9E08U3_</text>
<text x="583.0" y="547.7" font-size="2.60" fill="#a8a8a8" font-family="Liberation Sans" textLength="4.0" lengthAdjust="spacingAndGlyphs">B_</text>
<text x="645.5" y="554.1" font-size="2.89" fill="#858585" font-family="Liberation Sans" textLength="18.6" lengthAdjust="spacingAndGlyphs">ULI8W2ER</text>
<text x="637.0" y="552.0" font-size="2.60" fill="#959595" font-family="Liberation Sans" textLength="5.5" lengthAdjust="spacingAndGlyphs">V_</text>
<line x1="607" y1="553.4" x2="643.5" y2="553.4" stroke="#a0a0a0" stroke-width="0.9" />
<rect x="601.5" y="551.8" width="5.5" height="3.2" fill="none" stroke="#a0a0a0" stroke-width="0.7"/>
<text x="588.2" y="554.1" font-size="2.72" fill="#858585" font-family="Liberation Sans" textLength="10.8" lengthAdjust="spacingAndGlyphs">71ORP</text>
<text x="645.5" y="563.0" font-size="2.89" fill="#858585" font-family="Liberation Sans" textLength="24.3" lengthAdjust="spacingAndGlyphs">OD7LOABV2LK</text>
<text x="637.0" y="560.9" font-size="2.60" fill="#959595" font-family="Liberation Sans" textLength="5.5" lengthAdjust="spacingAndGlyphs">7C</text>
<line x1="607" y1="562.3" x2="643.5" y2="562.3" stroke="#a0a0a0" stroke-width="0.9" />
<rect x="601.5" y="560.7" width="5.5" height="3.2" fill="none" stroke="#a0a0a0" stroke-width="0.7"/>
<text x="589.0" y="563.0" font-size="2.72" fill="#858585" font-family="Liberation Sans" textLength="10.0" lengthAdjust="spacingAndGlyphs">6SBDH</text>
<text x="583.0" y="562.6" font-size="2.60" fill="#a8a8a8" font-family="Liberation Sans" textLength="6.0" lengthAdjust="spacingAndGlyphs">N7_</text>
<text x="645.5" y="568.7" font-size="2.89" fill="#858585" font-family="Liberation Sans" textLength="24.9" lengthAdjust="spacingAndGlyphs">9MOF2DDE_9K</text>
<text x="637.0" y="566.6" font-size="2.60" fill="#959595" font-family="Liberation Sans" textLength="5.5" lengthAdjust="spacingAndGlyphs">HA</text>
<line x1="607" y1="568" x2="643.5" y2="568" stroke="#a0a0a0" stroke-width="0.9" />
<rect x="601.5" y="566.4" width="5.5" height="3.2" fill="none" stroke="#a0a0a0" stroke-width="0.7"/>
<text x="588.4" y="568.7" font-size="2.72" fill="#858585" font-family="Liberation Sans" textLength="10.6" lengthAdjust="spacingAndGlyphs">CPN_H</text>
<text x="583.0" y="568.3" font-size="2.60" fill="#a8a8a8" font-family="Liberation Sans" textLength="3.0" lengthAdjust="spacingAndGlyphs">P</text>
<text x="645.5" y="574.3" font-size="2.89" fill="#858585" font-family="Liberation Sans" textLength="24.8" lengthAdjust="spacingAndGlyphs">KE3G67_6R_1</text>
<text x="637.0" y="572.2" font-size="2.60" fill="#959595" font-family="Liberation Sans" textLength="5.5" lengthAdjust="spacingAndGlyphs">TW</text>
<line x1="607" y1="573.6" x2="643.5" y2="573.6" stroke="#a0a0a0" stroke-width="0.9" />
<rect x="601.5" y="572.0" width="5.5" height="3.2" fill="none" stroke="#a0a0a0" stroke-width="0.7"/>
<text x="589.1" y="574.3" font-size="2.72" fill="#858585" font-family="Liberation Sans" textLength="9.9" lengthAdjust="spacingAndGlyphs">9BKL</text>
<text x="645.5" y="580.2" font-size="2.89" fill="#858585" font-family="Liberation Sans" textLength="17.3" lengthAdjust="spacingAndGlyphs">OE9PFK_I</text>
<text x="637.0" y="578.1" font-size="2.60" fill="#959595" font-family="Liberation Sans" textLength="5.5" lengthAdjust="spacingAndGlyphs">FS</text>
<line x1="607" y1="579.5" x2="643.5" y2="579.5" stroke="#a0a0a0" stroke-width="0.9" />
<rect x="601.5" y="577.9" width="5.5" height="3.2" fill="none" stroke="#a0a0a0" stroke-width="0.7"/>
<text x="585.7" y="580.2" font-size="2.72" fill="#858585" font-family="Liberation Sans" textLength="13.3" lengthAdjust="spacingAndGlyphs">447_KF</text>
<text x="583.0" y="579.8" font-size="2.60" fill="#a8a8a8" font-family="Liberation Sans" textLength="4.0" lengthAdjust="spacingAndGlyphs">EC</text>
<text x="645.5" y="585.9" font-size="2.89" fill="#858585" font-family="Liberation Sans" textLength="19.6" lengthAdjust="spacingAndGlyphs">CS_AKOC_G</text>
<text x="637.0" y="583.8" font-size="2.60" fill="#959595" font-family="Liberation Sans" textLength="5.5" lengthAdjust="spacingAndGlyphs">H_</text>
<line x1="607" y1="585.2" x2="643.5" y2="585.2" stroke="#a0a0a0" stroke-width="0.9" />
<rect x="601.5" y="583.6" width="5.5" height="3.2" fill="none" stroke="#a0a0a0" stroke-width="0.7"/>
<text x="585.1" y="585.9" font-size="2.72" fill="#858585" font-family="Liberation Sans" textLength="13.9" lengthAdjust="spacingAndGlyphs">A7_V3A</text>
<text x="645.5" y="597.2" font-size="2.89" fill="#858585" font-family="Liberation Sans" textLength="26.0" lengthAdjust="spacingAndGlyphs">F_80BSWST_F_</text>
<text x="637.0" y="595.1" font-size="2.60" fill="#959595" font-family="Liberation Sans" textLength="5.5" lengthAdjust="spacingAndGlyphs">OP</text>
<line x1="607" y1="596.5" x2="643.5" y2="596.5" stroke="#a0a0a0" stroke-width="0.9" />
<rect x="601.5" y="594.9" width="5.5" height="3.2" fill="none" stroke="#a0a0a0" stroke-width="0.7"/>
<text x="586.6" y="597.2" font-size="2.72" fill="#858585" font-family="Liberation Sans" textLength="12.4" lengthAdjust="spacingAndGlyphs">I4IHVB</text>
<text x="583.0" y="596.8" font-size="2.60" fill="#a8a8a8" font-family="Liberation Sans" textLength="6.0" lengthAdjust="spacingAndGlyphs">B6L</text>
<text x="645.5" y="602.7" font-size="2.89" fill="#858585" font-family="Liberation Sans" textLength="20.4" lengthAdjust="spacingAndGlyphs">A4P6C__UH</text>
<text x="637.0" y="600.6" font-size="2.60" fill="#959595" font-family="Liberation Sans" textLength="5.5" lengthAdjust="spacingAndGlyphs">V_</text>
<line x1="607" y1="602" x2="643.5" y2="602" stroke="#a0a0a0" stroke-width="0.9" />
<rect x="601.5" y="600.4" width="5.5" height="3.2" fill="none" stroke="#a0a0a0" stroke-width="0.7"/>
<text x="588.5" y="602.7" font-size="2.72" fill="#858585" font-family="Liberation Sans" textLength="10.5" lengthAdjust="spacingAndGlyphs">B5S3C</text>
<text x="583.0" y="602.3" font-size="2.60" fill="#a8a8a8" font-family="Liberation Sans" textLength="6.0" lengthAdjust="spacingAndGlyphs">FH_</text>
<text x="645.5" y="608.5" font-size="2.89" fill="#858585" font-family="Liberation Sans" textLength="29.1" lengthAdjust="spacingAndGlyphs">5P_M1B_VESB_S</text>
<text x="637.0" y="606.4" font-size="2.60" fill="#959595" font-family="Liberation Sans" textLength="5.5" lengthAdjust="spacingAndGlyphs">E_</text>
<line x1="607" y1="607.8" x2="643.5" y2="607.8" stroke="#a0a0a0" stroke-width="0.9" />
<rect x="601.5" y="606.2" width="5.5" height="3.2" fill="none" stroke="#a0a0a0" stroke-width="0.7"/>
<text x="586.6" y="608.5" font-size="2.72" fill="#858585" font-family="Liberation Sans" textLength="12.4" lengthAdjust="spacingAndGlyphs">RC03VI</text>
<text x="583.0" y="608.1" font-size="2.60" fill="#a8a8a8" font-family="Liberation Sans" textLength="3.0" lengthAdjust="spacingAndGlyphs">O</text>
<text x="645.5" y="614.2" font-size="2.89" fill="#858585" font-family="Liberation Sans" textLength="25.4" lengthAdjust="spacingAndGlyphs">8K8B_BU68P8N</text>
<text x="637.0" y="612.1" font-size="2.60" fill="#959595" font-family="Liberation Sans" textLength="5.5" lengthAdjust="spacingAndGlyphs">NG</text>
<line x1="607" y1="613.5" x2="643.5" y2="613.5" stroke="#a0a0a0" stroke-width="0.9" />
<rect x="601.5" y="611.9" width="5.5" height="3.2" fill="none" stroke="#a0a0a0" stroke-width="0.7"/>
<text x="587.7" y="614.2" font-size="2.72" fill="#858585" font-family="Liberation Sans" textLength="11.3" lengthAdjust="spacingAndGlyphs">HTRG3</text>
<text x="583.0" y="613.8" font-size="2.60" fill="#a8a8a8" font-family="Liberation Sans" textLength="4.0" lengthAdjust="spacingAndGlyphs">R0</text>
<text x="645.5" y="619.9" font-size="2.89" fill="#858585" font-family="Liberation Sans" textLength="20.9" lengthAdjust="spacingAndGlyphs">RNBMV_IU1D</text>
<text x="637.0" y="617.8" font-size="2.60" fill="#959595" font-family="Liberation Sans" textLength="5.5" lengthAdjust="spacingAndGlyphs">M_</text>
<line x1="607" y1="619.2" x2="643.5" y2="619.2" stroke="#a0a0a0" stroke-width="0.9" />
<rect x="601.5" y="617.6" width="5.5" height="3.2" fill="none" stroke="#a0a0a0" stroke-width="0.7"/>
<text x="585.2" y="619.9" font-size="2.72" fill="#858585" font-family="Liberation Sans" textLength="13.8" lengthAdjust="spacingAndGlyphs">335A5C</text>
<text x="645.5" y="625.7" font-size="2.89" fill="#858585" font-family="Liberation Sans" textLength="24.1" lengthAdjust="spacingAndGlyphs">ISKHG_BOTSI</text>
<text x="637.0" y="623.6" font-size="2.60" fill="#959595" font-family="Liberation Sans" textLength="5.5" lengthAdjust="spacingAndGlyphs">L0</text>
<line x1="607" y1="625" x2="643.5" y2="625" stroke="#a0a0a0" stroke-width="0.9" />
<rect x="601.5" y="623.4" width="5.5" height="3.2" fill="none" stroke="#a0a0a0" stroke-width="0.7"/>
<text x="588.0" y="625.7" font-size="2.72" fill="#858585" font-family="Liberation Sans" textLength="11.0" lengthAdjust="spacingAndGlyphs">7IPNM</text>
<text x="583.0" y="625.3" font-size="2.60" fill="#a8a8a8" font-family="Liberation Sans" textLength="4.0" lengthAdjust="spacingAndGlyphs">MG</text>
<text x="645.5" y="631.7" font-size="2.89" fill="#858585" font-family="Liberation Sans" textLength="20.2" lengthAdjust="spacingAndGlyphs">6_U_20_T0</text>
<text x="637.0" y="629.6" font-size="2.60" fill="#959595" font-family="Liberation Sans" textLength="5.5" lengthAdjust="spacingAndGlyphs">D6</text>
<line x1="607" y1="631" x2="643.5" y2="631" stroke="#a0a0a0" stroke-width="0.9" />
<rect x="601.5" y="629.4" width="5.5" height="3.2" fill="none" stroke="#a0a0a0" stroke-width="0.7"/>
<text x="588.0" y="631.7" font-size="2.72" fill="#858585" font-family="Liberation Sans" textLength="11.0" lengthAdjust="spacingAndGlyphs">4CDB8</text>
<text x="583.0" y="631.3" font-size="2.60" fill="#a8a8a8" font-family="Liberation Sans" textLength="4.0" lengthAdjust="spacingAndGlyphs">1F</text>
<text x="645.5" y="637.4" font-size="2.89" fill="#858585" font-family="Liberation Sans" textLength="32.8" lengthAdjust="spacingAndGlyphs">GF1C8EIT8_M8B6R</text>
<text x="637.0" y="635.3" font-size="2.60" fill="#959595" font-family="Liberation Sans" textLength="5.5" lengthAdjust="spacingAndGlyphs">2I</text>
<line x1="607" y1="636.7" x2="643.5" y2="636.7" stroke="#a0a0a0" stroke-width="0.9" />
<rect x="601.5" y="635.1" width="5.5" height="3.2" fill="none" stroke="#a0a0a0" stroke-width="0.7"/>
<text x="590.4" y="637.4" font-size="2.72" fill="#858585" font-family="Liberation Sans" textLength="8.6" lengthAdjust="spacingAndGlyphs">B7K0</text>
<text x="645.5" y="645.9" font-size="2.89" fill="#858585" font-family="Liberation Sans" textLength="28.3" lengthAdjust="spacingAndGlyphs">N9A9CVVI_P84_</text>
<text x="637.0" y="643.8" font-size="2.60" fill="#959595" font-family="Liberation Sans" textLength="5.5" lengthAdjust="spacingAndGlyphs">SR</text>
<line x1="607" y1="645.2" x2="643.5" y2="645.2" stroke="#a0a0a0" stroke-width="0.9" />
<rect x="601.5" y="643.6" width="5.5" height="3.2" fill="none" stroke="#a0a0a0" stroke-width="0.7"/>
<text x="588.1" y="645.9" font-size="2.72" fill="#858585" font-family="Liberation Sans" textLength="10.9" lengthAdjust="spacingAndGlyphs">A_HHA</text>
<text x="645.5" y="651.7" font-size="2.89" fill="#858585" font-family="Liberation Sans" textLength="33.7" lengthAdjust="spacingAndGlyphs">AR3V74M__G0_F_R</text>
<text x="637.0" y="649.6" font-size="2.60" fill="#959595" font-family="Liberation Sans" textLength="5.5" lengthAdjust="spacingAndGlyphs">4M</text>
<line x1="607" y1="651" x2="643.5" y2="651" stroke="#a0a0a0" stroke-width="0.9" />
<rect x="601.5" y="649.4" width="5.5" height="3.2" fill="none" stroke="#a0a0a0" stroke-width="0.7"/>
<text x="587.7" y="651.7" font-size="2.72" fill="#858585" font-family="Liberation Sans" textLength="11.3" lengthAdjust="spacingAndGlyphs">MTWL8</text>
<text x="583.0" y="651.3" font-size="2.60" fill="#a8a8a8" font-family="Liberation Sans" textLength="3.0" lengthAdjust="spacingAndGlyphs">7</text>
<text x="645.5" y="657.5" font-size="2.89" fill="#858585" font-family="Liberation Sans" textLength="19.0" lengthAdjust="spacingAndGlyphs">C7DSR_OBN</text>
<text x="637.0" y="655.4" font-size="2.60" fill="#959595" font-family="Liberation Sans" textLength="5.5" lengthAdjust="spacingAndGlyphs">S1</text>
<line x1="607" y1="656.8" x2="643.5" y2="656.8" stroke="#a0a0a0" stroke-width="0.9" />
<rect x="601.5" y="655.2" width="5.5" height="3.2" fill="none" stroke="#a0a0a0" stroke-width="0.7"/>
<text x="587.9" y="657.5" font-size="2.72" fill="#858585" font-family="Liberation Sans" textLength="11.1" lengthAdjust="spacingAndGlyphs">1ML65</text>
<text x="583.0" y="657.1" font-size="2.60" fill="#a8a8a8" font-family="Liberation Sans" textLength="3.0" lengthAdjust="spacingAndGlyphs">U</text>
<text x="645.5" y="663.2" font-size="2.89" fill="#858585" font-family="Liberation Sans" textLength="33.7" lengthAdjust="spacingAndGlyphs">WVIEVHA18_O08E_</text>
<text x="637.0" y="661.1" font-size="2.60" fill="#959595" font-family="Liberation Sans" textLength="5.5" lengthAdjust="spacingAndGlyphs">16</text>
<line x1="607" y1="662.5" x2="643.5" y2="662.5" stroke="#a0a0a0" stroke-width="0.9" />
<rect x="601.5" y="660.9" width="5.5" height="3.2" fill="none" stroke="#a0a0a0" stroke-width="0.7"/>
<text x="590.7" y="663.2" font-size="2.72" fill="#858585" font-family="Liberation Sans" textLength="8.3" lengthAdjust="spacingAndGlyphs">KTD7</text>
<text x="583.0" y="662.8" font-size="2.60" fill="#a8a8a8" font-family="Liberation Sans" textLength="6.0" lengthAdjust="spacingAndGlyphs">6M_</text>
<text x="645.5" y="668.7" font-size="2.89" fill="#858585" font-family="Liberation Sans" textLength="25.0" lengthAdjust="spacingAndGlyphs">6K23_0T6___</text>
<text x="637.0" y="666.6" font-size="2.60" fill="#959595" font-family="Liberation Sans" textLength="5.5" lengthAdjust="spacingAndGlyphs">87</text>
<line x1="607" y1="668" x2="643.5" y2="668" stroke="#a0a0a0" stroke-width="0.9" />
<rect x="601.5" y="666.4" width="5.5" height="3.2" fill="none" stroke="#a0a0a0" stroke-width="0.7"/>
<text x="587.1" y="668.7" font-size="2.72" fill="#858585" font-family="Liberation Sans" textLength="11.9" lengthAdjust="spacingAndGlyphs">D_IEN</text>
<text x="583.0" y="668.3" font-size="2.60" fill="#a8a8a8" font-family="Liberation Sans" textLength="3.0" lengthAdjust="spacingAndGlyphs">C</text>
<text x="645.5" y="674.6" font-size="2.89" fill="#858585" font-family="Liberation Sans" textLength="25.7" lengthAdjust="spacingAndGlyphs">MT__KAR_6B4T</text>
<text x="637.0" y="672.5" font-size="2.60" fill="#959595" font-family="Liberation Sans" textLength="5.5" lengthAdjust="spacingAndGlyphs">BV</text>
<line x1="607" y1="673.9" x2="643.5" y2="673.9" stroke="#a0a0a0" stroke-width="0.9" />
<rect x="601.5" y="672.3" width="5.5" height="3.2" fill="none" stroke="#a0a0a0" stroke-width="0.7"/>
<text x="585.7" y="674.6" font-size="2.72" fill="#858585" font-family="Liberation Sans" textLength="13.3" lengthAdjust="spacingAndGlyphs">VG645B</text>
<text x="583.0" y="674.2" font-size="2.60" fill="#a8a8a8" font-family="Liberation Sans" textLength="3.0" lengthAdjust="spacingAndGlyphs">9</text>
<text x="645.5" y="680.3" font-size="2.89" fill="#858585" font-family="Liberation Sans" textLength="20.7" lengthAdjust="spacingAndGlyphs">DI3CACAI4</text>
<text x="637.0" y="678.2" font-size="2.60" fill="#959595" font-family="Liberation Sans" textLength="5.5" lengthAdjust="spacingAndGlyphs">8N</text>
<line x1="607" y1="679.6" x2="643.5" y2="679.6" stroke="#a0a0a0" stroke-width="0.9" />
<rect x="601.5" y="678.0" width="5.5" height="3.2" fill="none" stroke="#a0a0a0" stroke-width="0.7"/>
<text x="588.5" y="680.3" font-size="2.72" fill="#858585" font-family="Liberation Sans" textLength="10.5" lengthAdjust="spacingAndGlyphs">T33_N</text>
<text x="645.5" y="485.0" font-size="2.89" fill="#858585" font-family="Liberation Sans" textLength="44.1" lengthAdjust="spacingAndGlyphs">7A__20MPI_V_2BTG___O</text>
<text x="637.0" y="482.9" font-size="2.60" fill="#959595" font-family="Liberation Sans" textLength="5.5" lengthAdjust="spacingAndGlyphs">A_</text>
<line x1="609" y1="484.3" x2="643.5" y2="484.3" stroke="#a0a0a0" stroke-width="0.9" />
<text x="611.0" y="483.3" font-size="2.60" fill="#808080" font-family="Liberation Sans" textLength="9.0" lengthAdjust="spacingAndGlyphs">S__5</text>
<text x="645.5" y="490.7" font-size="2.89" fill="#858585" font-family="Liberation Sans" textLength="49.5" lengthAdjust="spacingAndGlyphs">G___UO9O7_08FSE0W_M6OUD</text>
<text x="637.0" y="488.6" font-size="2.60" fill="#959595" font-family="Liberation Sans" textLength="5.5" lengthAdjust="spacingAndGlyphs">52</text>
<line x1="609" y1="490" x2="643.5" y2="490" stroke="#a0a0a0" stroke-width="0.9" />
<text x="611.0" y="489.0" font-size="2.60" fill="#808080" font-family="Liberation Sans" textLength="9.0" lengthAdjust="spacingAndGlyphs">PPNN</text>
<text x="645.5" y="496.5" font-size="2.89" fill="#858585" font-family="Liberation Sans" textLength="46.0" lengthAdjust="spacingAndGlyphs">U_SPB8TILRN_3R_89___I</text>
<text x="637.0" y="494.4" font-size="2.60" fill="#959595" font-family="Liberation Sans" textLength="5.5" lengthAdjust="spacingAndGlyphs">CB</text>
<line x1="609" y1="495.8" x2="643.5" y2="495.8" stroke="#a0a0a0" stroke-width="0.9" />
<text x="611.0" y="494.8" font-size="2.60" fill="#808080" font-family="Liberation Sans" textLength="9.0" lengthAdjust="spacingAndGlyphs">1SPA</text>
<text x="645.5" y="502.3" font-size="2.89" fill="#858585" font-family="Liberation Sans" textLength="48.7" lengthAdjust="spacingAndGlyphs">G9C_3H_BTCEF__6K_N_PC_</text>
<text x="637.0" y="500.2" font-size="2.60" fill="#959595" font-family="Liberation Sans" textLength="5.5" lengthAdjust="spacingAndGlyphs">WW</text>
<line x1="609" y1="501.6" x2="643.5" y2="501.6" stroke="#a0a0a0" stroke-width="0.9" />
<text x="611.0" y="500.6" font-size="2.60" fill="#808080" font-family="Liberation Sans" textLength="9.0" lengthAdjust="spacingAndGlyphs">L2TO</text>
<text x="645.5" y="508.1" font-size="2.89" fill="#858585" font-family="Liberation Sans" textLength="43.8" lengthAdjust="spacingAndGlyphs">5L9VGE_B__VKC26OCOVP</text>
<text x="637.0" y="506.0" font-size="2.60" fill="#959595" font-family="Liberation Sans" textLength="5.5" lengthAdjust="spacingAndGlyphs">E9</text>
<line x1="609" y1="507.4" x2="643.5" y2="507.4" stroke="#a0a0a0" stroke-width="0.9" />
<text x="611.0" y="506.4" font-size="2.60" fill="#808080" font-family="Liberation Sans" textLength="9.0" lengthAdjust="spacingAndGlyphs">D1RK</text>
<text x="645.5" y="513.7" font-size="2.89" fill="#858585" font-family="Liberation Sans" textLength="41.2" lengthAdjust="spacingAndGlyphs">76_HNOPMK0KAH_UII53</text>
<text x="637.0" y="511.6" font-size="2.60" fill="#959595" font-family="Liberation Sans" textLength="5.5" lengthAdjust="spacingAndGlyphs">U_</text>
<line x1="609" y1="513" x2="643.5" y2="513" stroke="#a0a0a0" stroke-width="0.9" />
<text x="611.0" y="512.0" font-size="2.60" fill="#808080" font-family="Liberation Sans" textLength="9.0" lengthAdjust="spacingAndGlyphs">0_CA</text>
<text x="645.5" y="519.6" font-size="2.89" fill="#858585" font-family="Liberation Sans" textLength="43.7" lengthAdjust="spacingAndGlyphs">2176_R__RV_ANH1__WWS</text>
<text x="637.0" y="517.5" font-size="2.60" fill="#959595" font-family="Liberation Sans" textLength="5.5" lengthAdjust="spacingAndGlyphs">UM</text>
<line x1="609" y1="518.9" x2="643.5" y2="518.9" stroke="#a0a0a0" stroke-width="0.9" />
<text x="611.0" y="517.9" font-size="2.60" fill="#808080" font-family="Liberation Sans" textLength="9.0" lengthAdjust="spacingAndGlyphs">5_2A</text>
<text x="645.5" y="525.4" font-size="2.89" fill="#858585" font-family="Liberation Sans" textLength="41.7" lengthAdjust="spacingAndGlyphs">W4I27_AM7DTDDSCESKH</text>
<text x="637.0" y="523.3" font-size="2.60" fill="#959595" font-family="Liberation Sans" textLength="5.5" lengthAdjust="spacingAndGlyphs">HP</text>
<line x1="609" y1="524.7" x2="643.5" y2="524.7" stroke="#a0a0a0" stroke-width="0.9" />
<text x="611.0" y="523.7" font-size="2.60" fill="#808080" font-family="Liberation Sans" textLength="9.0" lengthAdjust="spacingAndGlyphs">BUT_</text>
<path d="M560,481.5 H604 L608.5,485 V524 L604,527.5 H600" fill="none" stroke="#303030" stroke-width="1.3"/>
<text x="568.0" y="480.4" font-size="2.60" fill="#8a8a8a" font-family="Liberation Sans" textLength="14.0" lengthAdjust="spacingAndGlyphs">EDS_S_</text>
<text x="789.6" y="284.0" font-size="2.89" fill="#858585" font-family="Liberation Sans" textLength="18.9" lengthAdjust="spacingAndGlyphs">99_H_2N_A</text>
<text x="811.0" y="281.9" font-size="2.60" fill="#959595" font-family="Liberation Sans" textLength="5.5" lengthAdjust="spacingAndGlyphs">N_</text>
<text x="792.1" y="289.8" font-size="2.89" fill="#858585" font-family="Liberation Sans" textLength="16.4" lengthAdjust="spacingAndGlyphs">93BK_DO</text>
<text x="811.0" y="287.7" font-size="2.60" fill="#959595" font-family="Liberation Sans" textLength="5.5" lengthAdjust="spacingAndGlyphs">LG</text>
<line x1="809.8" y1="289.1" x2="848" y2="289.1" stroke="#a0a0a0" stroke-width="0.9" />
<rect x="848.0" y="287.5" width="6.0" height="3.2" fill="none" stroke="#a0a0a0" stroke-width="0.7"/>
<text x="856.0" y="289.8" font-size="2.72" fill="#858585" font-family="Liberation Sans" textLength="14.5" lengthAdjust="spacingAndGlyphs">7ESDKVM</text>
<text x="876.5" y="289.0" font-size="2.60" fill="#a8a8a8" font-family="Liberation Sans" textLength="4.0" lengthAdjust="spacingAndGlyphs">4M</text>
<text x="789.3" y="295.7" font-size="2.89" fill="#858585" font-family="Liberation Sans" textLength="19.2" lengthAdjust="spacingAndGlyphs">LBS_T5DBR</text>
<text x="811.0" y="293.6" font-size="2.60" fill="#959595" font-family="Liberation Sans" textLength="5.5" lengthAdjust="spacingAndGlyphs">92</text>
<line x1="809.8" y1="295" x2="848" y2="295" stroke="#a0a0a0" stroke-width="0.9" />
<rect x="848.0" y="293.4" width="6.0" height="3.2" fill="none" stroke="#a0a0a0" stroke-width="0.7"/>
<text x="856.0" y="295.7" font-size="2.72" fill="#858585" font-family="Liberation Sans" textLength="13.3" lengthAdjust="spacingAndGlyphs">2_9_MM</text>
<text x="788.9" y="301.1" font-size="2.89" fill="#858585" font-family="Liberation Sans" textLength="19.6" lengthAdjust="spacingAndGlyphs">5VBR_M__I</text>
<text x="811.0" y="299.0" font-size="2.60" fill="#959595" font-family="Liberation Sans" textLength="5.5" lengthAdjust="spacingAndGlyphs">4O</text>
<line x1="809.8" y1="300.4" x2="848" y2="300.4" stroke="#a0a0a0" stroke-width="0.9" />
<rect x="848.0" y="298.8" width="6.0" height="3.2" fill="none" stroke="#a0a0a0" stroke-width="0.7"/>
<text x="856.0" y="301.1" font-size="2.72" fill="#858585" font-family="Liberation Sans" textLength="14.5" lengthAdjust="spacingAndGlyphs">MKD_5B5</text>
<text x="876.5" y="300.3" font-size="2.60" fill="#a8a8a8" font-family="Liberation Sans" textLength="4.0" lengthAdjust="spacingAndGlyphs">KB</text>
<text x="786.5" y="307.0" font-size="2.89" fill="#858585" font-family="Liberation Sans" textLength="22.0" lengthAdjust="spacingAndGlyphs">R_T_1_3T_O</text>
<text x="811.0" y="304.9" font-size="2.60" fill="#959595" font-family="Liberation Sans" textLength="5.5" lengthAdjust="spacingAndGlyphs">L8</text>
<line x1="809.8" y1="306.3" x2="848" y2="306.3" stroke="#a0a0a0" stroke-width="0.9" />
<rect x="848.0" y="304.7" width="6.0" height="3.2" fill="none" stroke="#a0a0a0" stroke-width="0.7"/>
<text x="856.0" y="307.0" font-size="2.72" fill="#858585" font-family="Liberation Sans" textLength="17.2" lengthAdjust="spacingAndGlyphs">C__EP4_2</text>
<text x="787.8" y="313.0" font-size="2.89" fill="#858585" font-family="Liberation Sans" textLength="20.7" lengthAdjust="spacingAndGlyphs">901__9DG_</text>
<text x="811.0" y="310.9" font-size="2.60" fill="#959595" font-family="Liberation Sans" textLength="5.5" lengthAdjust="spacingAndGlyphs">L5</text>
<line x1="809.8" y1="312.3" x2="848" y2="312.3" stroke="#a0a0a0" stroke-width="0.9" />
<rect x="848.0" y="310.7" width="6.0" height="3.2" fill="none" stroke="#a0a0a0" stroke-width="0.7"/>
<text x="856.0" y="313.0" font-size="2.72" fill="#858585" font-family="Liberation Sans" textLength="17.5" lengthAdjust="spacingAndGlyphs">ER7N1R43</text>
<text x="879.5" y="312.2" font-size="2.60" fill="#a8a8a8" font-family="Liberation Sans" textLength="4.0" lengthAdjust="spacingAndGlyphs">TF</text>
<text x="755.3" y="324.3" font-size="2.89" fill="#858585" font-family="Liberation Sans" textLength="53.2" lengthAdjust="spacingAndGlyphs">LMWU0UPU_N1W2BCI18T_SR_V</text>
<text x="811.0" y="322.2" font-size="2.60" fill="#959595" font-family="Liberation Sans" textLength="5.5" lengthAdjust="spacingAndGlyphs">DS</text>
<text x="753.1" y="330.2" font-size="2.89" fill="#858585" font-family="Liberation Sans" textLength="55.4" lengthAdjust="spacingAndGlyphs">BMTR_3K_G6VFU_MM_46I_FIKE</text>
<text x="811.0" y="328.1" font-size="2.60" fill="#959595" font-family="Liberation Sans" textLength="5.5" lengthAdjust="spacingAndGlyphs">II</text>
<text x="777.6" y="336.1" font-size="2.89" fill="#858585" font-family="Liberation Sans" textLength="30.9" lengthAdjust="spacingAndGlyphs">4S_56__F0UIOMT</text>
<text x="811.0" y="334.0" font-size="2.60" fill="#959595" font-family="Liberation Sans" textLength="5.5" lengthAdjust="spacingAndGlyphs">H0</text>
<line x1="809.8" y1="335.4" x2="861" y2="335.4" stroke="#a0a0a0" stroke-width="0.9" />
<rect x="861.0" y="333.8" width="6.0" height="3.2" fill="none" stroke="#a0a0a0" stroke-width="0.7"/>
<text x="869.0" y="336.1" font-size="2.72" fill="#858585" font-family="Liberation Sans" textLength="11.7" lengthAdjust="spacingAndGlyphs">2WU79</text>
<text x="886.7" y="335.3" font-size="2.60" fill="#a8a8a8" font-family="Liberation Sans" textLength="4.0" lengthAdjust="spacingAndGlyphs">U0</text>
<text x="756.2" y="341.7" font-size="2.89" fill="#858585" font-family="Liberation Sans" textLength="52.3" lengthAdjust="spacingAndGlyphs">KD9_KE_C_E04T_F_VGDR1T7E</text>
<text x="811.0" y="339.6" font-size="2.60" fill="#959595" font-family="Liberation Sans" textLength="5.5" lengthAdjust="spacingAndGlyphs">7L</text>
<line x1="809.8" y1="341" x2="861" y2="341" stroke="#a0a0a0" stroke-width="0.9" />
<rect x="861.0" y="339.4" width="6.0" height="3.2" fill="none" stroke="#a0a0a0" stroke-width="0.7"/>
<text x="869.0" y="341.7" font-size="2.72" fill="#858585" font-family="Liberation Sans" textLength="10.2" lengthAdjust="spacingAndGlyphs">IT8_4</text>
<text x="885.2" y="340.9" font-size="2.60" fill="#a8a8a8" font-family="Liberation Sans" textLength="4.0" lengthAdjust="spacingAndGlyphs">R0</text>
<text x="761.4" y="347.3" font-size="2.89" fill="#858585" font-family="Liberation Sans" textLength="47.1" lengthAdjust="spacingAndGlyphs">78_FB_KAE163C__NOHAHU</text>
<text x="811.0" y="345.2" font-size="2.60" fill="#959595" font-family="Liberation Sans" textLength="5.5" lengthAdjust="spacingAndGlyphs">ML</text>
<line x1="809.8" y1="346.6" x2="861" y2="346.6" stroke="#a0a0a0" stroke-width="0.9" />
<rect x="861.0" y="345.0" width="6.0" height="3.2" fill="none" stroke="#a0a0a0" stroke-width="0.7"/>
<text x="869.0" y="347.3" font-size="2.72" fill="#858585" font-family="Liberation Sans" textLength="13.2" lengthAdjust="spacingAndGlyphs">MHO__R</text>
<text x="888.2" y="346.5" font-size="2.60" fill="#a8a8a8" font-family="Liberation Sans" textLength="4.0" lengthAdjust="spacingAndGlyphs">8H</text>
<text x="766.5" y="358.7" font-size="2.89" fill="#858585" font-family="Liberation Sans" textLength="42.0" lengthAdjust="spacingAndGlyphs">VSUFCLG4C_HBEM__E0L</text>
<text x="811.0" y="356.6" font-size="2.60" fill="#959595" font-family="Liberation Sans" textLength="5.5" lengthAdjust="spacingAndGlyphs">48</text>
<text x="776.3" y="364.3" font-size="2.89" fill="#858585" font-family="Liberation Sans" textLength="32.2" lengthAdjust="spacingAndGlyphs">UC5BNOE__HL__LG</text>
<text x="811.0" y="362.2" font-size="2.60" fill="#959595" font-family="Liberation Sans" textLength="5.5" lengthAdjust="spacingAndGlyphs">H_</text>
<text x="766.5" y="370.0" font-size="2.89" fill="#858585" font-family="Liberation Sans" textLength="42.0" lengthAdjust="spacingAndGlyphs">77P2_9F0_FITPSC_C30</text>
<text x="811.0" y="367.9" font-size="2.60" fill="#959595" font-family="Liberation Sans" textLength="5.5" lengthAdjust="spacingAndGlyphs">S9</text>
<line x1="809.8" y1="369.3" x2="860" y2="369.3" stroke="#a0a0a0" stroke-width="0.9" />
<rect x="860.0" y="367.7" width="6.0" height="3.2" fill="none" stroke="#a0a0a0" stroke-width="0.7"/>
<text x="868.0" y="370.0" font-size="2.72" fill="#858585" font-family="Liberation Sans" textLength="11.3" lengthAdjust="spacingAndGlyphs">U_7P6</text>
<text x="885.3" y="369.2" font-size="2.60" fill="#a8a8a8" font-family="Liberation Sans" textLength="4.0" lengthAdjust="spacingAndGlyphs">B9</text>
<text x="771.8" y="376.0" font-size="2.89" fill="#858585" font-family="Liberation Sans" textLength="36.7" lengthAdjust="spacingAndGlyphs">0_NK__GA4VP_FB6MI</text>
<text x="811.0" y="373.9" font-size="2.60" fill="#959595" font-family="Liberation Sans" textLength="5.5" lengthAdjust="spacingAndGlyphs">VF</text>
<line x1="809.8" y1="375.3" x2="860" y2="375.3" stroke="#a0a0a0" stroke-width="0.9" />
<rect x="860.0" y="373.7" width="6.0" height="3.2" fill="none" stroke="#a0a0a0" stroke-width="0.7"/>
<text x="868.0" y="376.0" font-size="2.72" fill="#858585" font-family="Liberation Sans" textLength="11.6" lengthAdjust="spacingAndGlyphs">7VTI8</text>
<text x="885.6" y="375.2" font-size="2.60" fill="#a8a8a8" font-family="Liberation Sans" textLength="4.0" lengthAdjust="spacingAndGlyphs">06</text>
<text x="766.2" y="387.6" font-size="2.89" fill="#858585" font-family="Liberation Sans" textLength="42.3" lengthAdjust="spacingAndGlyphs">0_8FLU1KWMD8WANUUCW</text>
<text x="811.0" y="385.5" font-size="2.60" fill="#959595" font-family="Liberation Sans" textLength="5.5" lengthAdjust="spacingAndGlyphs">R_</text>
<line x1="809.8" y1="386.9" x2="860" y2="386.9" stroke="#a0a0a0" stroke-width="0.9" />
<rect x="860.0" y="385.3" width="6.0" height="3.2" fill="none" stroke="#a0a0a0" stroke-width="0.7"/>
<text x="868.0" y="387.6" font-size="2.72" fill="#858585" font-family="Liberation Sans" textLength="9.4" lengthAdjust="spacingAndGlyphs">AP_B</text>
<text x="883.4" y="386.8" font-size="2.60" fill="#a8a8a8" font-family="Liberation Sans" textLength="4.0" lengthAdjust="spacingAndGlyphs">5B</text>
<text x="782.1" y="393.3" font-size="2.89" fill="#858585" font-family="Liberation Sans" textLength="26.4" lengthAdjust="spacingAndGlyphs">7DT__E5SG140</text>
<text x="811.0" y="391.2" font-size="2.60" fill="#959595" font-family="Liberation Sans" textLength="5.5" lengthAdjust="spacingAndGlyphs">8_</text>
<line x1="809.8" y1="392.6" x2="860" y2="392.6" stroke="#a0a0a0" stroke-width="0.9" />
<rect x="860.0" y="391.0" width="6.0" height="3.2" fill="none" stroke="#a0a0a0" stroke-width="0.7"/>
<text x="868.0" y="393.3" font-size="2.72" fill="#858585" font-family="Liberation Sans" textLength="10.5" lengthAdjust="spacingAndGlyphs">247_K</text>
<text x="787.4" y="399.2" font-size="2.89" fill="#858585" font-family="Liberation Sans" textLength="21.1" lengthAdjust="spacingAndGlyphs">4_LW89CF_6</text>
<text x="811.0" y="397.1" font-size="2.60" fill="#959595" font-family="Liberation Sans" textLength="5.5" lengthAdjust="spacingAndGlyphs">NF</text>
<line x1="809.8" y1="398.5" x2="860" y2="398.5" stroke="#a0a0a0" stroke-width="0.9" />
<rect x="860.0" y="396.9" width="6.0" height="3.2" fill="none" stroke="#a0a0a0" stroke-width="0.7"/>
<text x="868.0" y="399.2" font-size="2.72" fill="#858585" font-family="Liberation Sans" textLength="14.1" lengthAdjust="spacingAndGlyphs">31E0_3</text>
<text x="888.1" y="398.4" font-size="2.60" fill="#a8a8a8" font-family="Liberation Sans" textLength="4.0" lengthAdjust="spacingAndGlyphs">3U</text>
<text x="781.9" y="404.7" font-size="2.89" fill="#858585" font-family="Liberation Sans" textLength="26.6" lengthAdjust="spacingAndGlyphs">RR1ARHV1_PF_</text>
<text x="811.0" y="402.6" font-size="2.60" fill="#959595" font-family="Liberation Sans" textLength="5.5" lengthAdjust="spacingAndGlyphs">I9</text>
<text x="785.9" y="410.4" font-size="2.89" fill="#858585" font-family="Liberation Sans" textLength="22.6" lengthAdjust="spacingAndGlyphs">L8_U9BIR__</text>
<text x="811.0" y="408.3" font-size="2.60" fill="#959595" font-family="Liberation Sans" textLength="5.5" lengthAdjust="spacingAndGlyphs">1R</text>
<text x="800.2" y="422.2" font-size="2.89" fill="#858585" font-family="Liberation Sans" textLength="8.3" lengthAdjust="spacingAndGlyphs">SGML</text>
<text x="811.0" y="420.1" font-size="2.60" fill="#959595" font-family="Liberation Sans" textLength="5.5" lengthAdjust="spacingAndGlyphs">N_</text>
<line x1="809.8" y1="421.5" x2="858" y2="421.5" stroke="#a0a0a0" stroke-width="0.9" />
<rect x="858.0" y="419.9" width="6.0" height="3.2" fill="none" stroke="#a0a0a0" stroke-width="0.7"/>
<text x="866.0" y="422.2" font-size="2.72" fill="#858585" font-family="Liberation Sans" textLength="8.5" lengthAdjust="spacingAndGlyphs">M6WG</text>
<text x="880.5" y="421.4" font-size="2.60" fill="#a8a8a8" font-family="Liberation Sans" textLength="4.0" lengthAdjust="spacingAndGlyphs">H8</text>
<text x="799.6" y="428.1" font-size="2.89" fill="#858585" font-family="Liberation Sans" textLength="8.9" lengthAdjust="spacingAndGlyphs">DR34</text>
<text x="811.0" y="426.0" font-size="2.60" fill="#959595" font-family="Liberation Sans" textLength="5.5" lengthAdjust="spacingAndGlyphs">WS</text>
<line x1="809.8" y1="427.4" x2="858" y2="427.4" stroke="#a0a0a0" stroke-width="0.9" />
<rect x="858.0" y="425.8" width="6.0" height="3.2" fill="none" stroke="#a0a0a0" stroke-width="0.7"/>
<text x="866.0" y="428.1" font-size="2.72" fill="#858585" font-family="Liberation Sans" textLength="17.0" lengthAdjust="spacingAndGlyphs">IOS_BFIU</text>
<text x="801.5" y="433.5" font-size="2.89" fill="#858585" font-family="Liberation Sans" textLength="7.0" lengthAdjust="spacingAndGlyphs">3BP</text>
<text x="811.0" y="431.4" font-size="2.60" fill="#959595" font-family="Liberation Sans" textLength="5.5" lengthAdjust="spacingAndGlyphs">BD</text>
<line x1="809.8" y1="432.8" x2="858" y2="432.8" stroke="#a0a0a0" stroke-width="0.9" />
<rect x="858.0" y="431.2" width="6.0" height="3.2" fill="none" stroke="#a0a0a0" stroke-width="0.7"/>
<text x="866.0" y="433.5" font-size="2.72" fill="#858585" font-family="Liberation Sans" textLength="17.5" lengthAdjust="spacingAndGlyphs">G7T_16_U</text>
<text x="801.8" y="439.3" font-size="2.89" fill="#858585" font-family="Liberation Sans" textLength="6.7" lengthAdjust="spacingAndGlyphs">50O</text>
<text x="811.0" y="437.2" font-size="2.60" fill="#959595" font-family="Liberation Sans" textLength="5.5" lengthAdjust="spacingAndGlyphs">B_</text>
<line x1="809.8" y1="438.6" x2="858" y2="438.6" stroke="#a0a0a0" stroke-width="0.9" />
<rect x="858.0" y="437.0" width="6.0" height="3.2" fill="none" stroke="#a0a0a0" stroke-width="0.7"/>
<text x="866.0" y="439.3" font-size="2.72" fill="#858585" font-family="Liberation Sans" textLength="13.6" lengthAdjust="spacingAndGlyphs">H_A2PG</text>
<text x="787.1" y="450.9" font-size="2.89" fill="#858585" font-family="Liberation Sans" textLength="21.4" lengthAdjust="spacingAndGlyphs">R6W_H2O6I_</text>
<text x="811.0" y="448.8" font-size="2.60" fill="#959595" font-family="Liberation Sans" textLength="5.5" lengthAdjust="spacingAndGlyphs">CP</text>
<line x1="809.8" y1="450.2" x2="853" y2="450.2" stroke="#a0a0a0" stroke-width="0.9" />
<rect x="853.0" y="448.6" width="6.0" height="3.2" fill="none" stroke="#a0a0a0" stroke-width="0.7"/>
<text x="861.0" y="450.9" font-size="2.72" fill="#858585" font-family="Liberation Sans" textLength="10.1" lengthAdjust="spacingAndGlyphs">0PGOV</text>
<text x="788.7" y="456.3" font-size="2.89" fill="#858585" font-family="Liberation Sans" textLength="19.8" lengthAdjust="spacingAndGlyphs">RTNS472H9</text>
<text x="811.0" y="454.2" font-size="2.60" fill="#959595" font-family="Liberation Sans" textLength="5.5" lengthAdjust="spacingAndGlyphs">V0</text>
<line x1="809.8" y1="455.6" x2="853" y2="455.6" stroke="#a0a0a0" stroke-width="0.9" />
<rect x="853.0" y="454.0" width="6.0" height="3.2" fill="none" stroke="#a0a0a0" stroke-width="0.7"/>
<text x="861.0" y="456.3" font-size="2.72" fill="#858585" font-family="Liberation Sans" textLength="12.5" lengthAdjust="spacingAndGlyphs">GHC215</text>
<text x="879.5" y="455.5" font-size="2.60" fill="#a8a8a8" font-family="Liberation Sans" textLength="4.0" lengthAdjust="spacingAndGlyphs">3C</text>
<text x="788.0" y="462.0" font-size="2.89" fill="#858585" font-family="Liberation Sans" textLength="20.5" lengthAdjust="spacingAndGlyphs">HKGO_5WU1</text>
<text x="811.0" y="459.9" font-size="2.60" fill="#959595" font-family="Liberation Sans" textLength="5.5" lengthAdjust="spacingAndGlyphs">3M</text>
<line x1="809.8" y1="461.3" x2="853" y2="461.3" stroke="#a0a0a0" stroke-width="0.9" />
<rect x="853.0" y="459.7" width="6.0" height="3.2" fill="none" stroke="#a0a0a0" stroke-width="0.7"/>
<text x="861.0" y="462.0" font-size="2.72" fill="#858585" font-family="Liberation Sans" textLength="13.8" lengthAdjust="spacingAndGlyphs">I0T__U</text>
<text x="880.8" y="461.2" font-size="2.60" fill="#a8a8a8" font-family="Liberation Sans" textLength="4.0" lengthAdjust="spacingAndGlyphs">2A</text>
<text x="789.4" y="474.0" font-size="2.89" fill="#858585" font-family="Liberation Sans" textLength="19.1" lengthAdjust="spacingAndGlyphs">U9F407ODP</text>
<text x="811.0" y="471.9" font-size="2.60" fill="#959595" font-family="Liberation Sans" textLength="5.5" lengthAdjust="spacingAndGlyphs">PP</text>
<line x1="809.8" y1="473.3" x2="853" y2="473.3" stroke="#a0a0a0" stroke-width="0.9" />
<rect x="853.0" y="471.7" width="6.0" height="3.2" fill="none" stroke="#a0a0a0" stroke-width="0.7"/>
<text x="861.0" y="474.0" font-size="2.72" fill="#858585" font-family="Liberation Sans" textLength="13.7" lengthAdjust="spacingAndGlyphs">9OC_F5</text>
<text x="880.7" y="473.2" font-size="2.60" fill="#a8a8a8" font-family="Liberation Sans" textLength="4.0" lengthAdjust="spacingAndGlyphs">1M</text>
<text x="788.2" y="479.7" font-size="2.89" fill="#858585" font-family="Liberation Sans" textLength="20.3" lengthAdjust="spacingAndGlyphs">S_046VF_W</text>
<text x="811.0" y="477.6" font-size="2.60" fill="#959595" font-family="Liberation Sans" textLength="5.5" lengthAdjust="spacingAndGlyphs">4_</text>
<line x1="809.8" y1="479" x2="853" y2="479" stroke="#a0a0a0" stroke-width="0.9" />
<rect x="853.0" y="477.4" width="6.0" height="3.2" fill="none" stroke="#a0a0a0" stroke-width="0.7"/>
<text x="861.0" y="479.7" font-size="2.72" fill="#858585" font-family="Liberation Sans" textLength="9.9" lengthAdjust="spacingAndGlyphs">A106V</text>
<text x="787.7" y="485.4" font-size="2.89" fill="#858585" font-family="Liberation Sans" textLength="20.8" lengthAdjust="spacingAndGlyphs">L7RA4KMHL</text>
<text x="811.0" y="483.3" font-size="2.60" fill="#959595" font-family="Liberation Sans" textLength="5.5" lengthAdjust="spacingAndGlyphs">E8</text>
<line x1="809.8" y1="484.7" x2="853" y2="484.7" stroke="#a0a0a0" stroke-width="0.9" />
<rect x="853.0" y="483.1" width="6.0" height="3.2" fill="none" stroke="#a0a0a0" stroke-width="0.7"/>
<text x="861.0" y="485.4" font-size="2.72" fill="#858585" font-family="Liberation Sans" textLength="11.4" lengthAdjust="spacingAndGlyphs">PF83_</text>
<text x="878.4" y="484.6" font-size="2.60" fill="#a8a8a8" font-family="Liberation Sans" textLength="4.0" lengthAdjust="spacingAndGlyphs">13</text>
<text x="755.5" y="496.8" font-size="2.89" fill="#858585" font-family="Liberation Sans" textLength="53.0" lengthAdjust="spacingAndGlyphs">6RH0_C0U_UR64__FB1BKAM_K</text>
<text x="811.0" y="494.7" font-size="2.60" fill="#959595" font-family="Liberation Sans" textLength="5.5" lengthAdjust="spacingAndGlyphs">I_</text>
<line x1="809.8" y1="496.1" x2="853" y2="496.1" stroke="#a0a0a0" stroke-width="0.9" />
<rect x="853.0" y="494.5" width="6.0" height="3.2" fill="none" stroke="#a0a0a0" stroke-width="0.7"/>
<text x="861.0" y="496.8" font-size="2.72" fill="#858585" font-family="Liberation Sans" textLength="11.6" lengthAdjust="spacingAndGlyphs">OI___</text>
<text x="767.3" y="502.4" font-size="2.89" fill="#858585" font-family="Liberation Sans" textLength="41.2" lengthAdjust="spacingAndGlyphs">T341HNIS46AN_VS6T19</text>
<text x="811.0" y="500.3" font-size="2.60" fill="#959595" font-family="Liberation Sans" textLength="5.5" lengthAdjust="spacingAndGlyphs">P_</text>
<line x1="809.8" y1="501.7" x2="853" y2="501.7" stroke="#a0a0a0" stroke-width="0.9" />
<rect x="853.0" y="500.1" width="6.0" height="3.2" fill="none" stroke="#a0a0a0" stroke-width="0.7"/>
<text x="861.0" y="502.4" font-size="2.72" fill="#858585" font-family="Liberation Sans" textLength="13.0" lengthAdjust="spacingAndGlyphs">HW5DLS</text>
<text x="880.0" y="501.6" font-size="2.60" fill="#a8a8a8" font-family="Liberation Sans" textLength="4.0" lengthAdjust="spacingAndGlyphs">BS</text>
<text x="764.4" y="508.1" font-size="2.89" fill="#858585" font-family="Liberation Sans" textLength="44.1" lengthAdjust="spacingAndGlyphs">9_A4WP9UU_C7RP4UV_0V</text>
<text x="811.0" y="506.0" font-size="2.60" fill="#959595" font-family="Liberation Sans" textLength="5.5" lengthAdjust="spacingAndGlyphs">CK</text>
<line x1="809.8" y1="507.4" x2="853" y2="507.4" stroke="#a0a0a0" stroke-width="0.9" />
<rect x="853.0" y="505.8" width="6.0" height="3.2" fill="none" stroke="#a0a0a0" stroke-width="0.7"/>
<text x="861.0" y="508.1" font-size="2.72" fill="#858585" font-family="Liberation Sans" textLength="11.3" lengthAdjust="spacingAndGlyphs">9S_I4</text>
<text x="760.7" y="519.5" font-size="2.89" fill="#858585" font-family="Liberation Sans" textLength="47.8" lengthAdjust="spacingAndGlyphs">B2EW__945LV_6N01O9_I0_</text>
<text x="811.0" y="517.4" font-size="2.60" fill="#959595" font-family="Liberation Sans" textLength="5.5" lengthAdjust="spacingAndGlyphs">IH</text>
<line x1="809.8" y1="518.8" x2="853" y2="518.8" stroke="#a0a0a0" stroke-width="0.9" />
<rect x="853.0" y="517.2" width="6.0" height="3.2" fill="none" stroke="#a0a0a0" stroke-width="0.7"/>
<text x="861.0" y="519.5" font-size="2.72" fill="#858585" font-family="Liberation Sans" textLength="11.8" lengthAdjust="spacingAndGlyphs">81_WN</text>
<text x="773.9" y="527.9" font-size="2.89" fill="#858585" font-family="Liberation Sans" textLength="34.6" lengthAdjust="spacingAndGlyphs">A_N_D_MN_8GRWHRC</text>
<text x="811.0" y="525.8" font-size="2.60" fill="#959595" font-family="Liberation Sans" textLength="5.5" lengthAdjust="spacingAndGlyphs">TB</text>
<line x1="809.8" y1="527.2" x2="853" y2="527.2" stroke="#a0a0a0" stroke-width="0.9" />
<rect x="853.0" y="525.6" width="6.0" height="3.2" fill="none" stroke="#a0a0a0" stroke-width="0.7"/>
<text x="861.0" y="527.9" font-size="2.72" fill="#858585" font-family="Liberation Sans" textLength="9.3" lengthAdjust="spacingAndGlyphs">N6N3</text>
<text x="876.3" y="527.1" font-size="2.60" fill="#a8a8a8" font-family="Liberation Sans" textLength="4.0" lengthAdjust="spacingAndGlyphs">7_</text>
<text x="758.7" y="533.1" font-size="2.89" fill="#858585" font-family="Liberation Sans" textLength="49.8" lengthAdjust="spacingAndGlyphs">EV__N_EV4__GOWC_NNS__V_</text>
<text x="811.0" y="531.0" font-size="2.60" fill="#959595" font-family="Liberation Sans" textLength="5.5" lengthAdjust="spacingAndGlyphs">4A</text>
<line x1="809.8" y1="532.4" x2="853" y2="532.4" stroke="#a0a0a0" stroke-width="0.9" />
<rect x="853.0" y="530.8" width="6.0" height="3.2" fill="none" stroke="#a0a0a0" stroke-width="0.7"/>
<text x="861.0" y="533.1" font-size="2.72" fill="#858585" font-family="Liberation Sans" textLength="12.2" lengthAdjust="spacingAndGlyphs">4NKE_7</text>
<text x="879.2" y="532.3" font-size="2.60" fill="#a8a8a8" font-family="Liberation Sans" textLength="4.0" lengthAdjust="spacingAndGlyphs">1_</text>
<text x="763.9" y="539.2" font-size="2.89" fill="#858585" font-family="Liberation Sans" textLength="44.6" lengthAdjust="spacingAndGlyphs">IK4_WNLDD6U977HWU_U_</text>
<text x="811.0" y="537.1" font-size="2.60" fill="#959595" font-family="Liberation Sans" textLength="5.5" lengthAdjust="spacingAndGlyphs">3B</text>
<line x1="809.8" y1="538.5" x2="853" y2="538.5" stroke="#a0a0a0" stroke-width="0.9" />
<rect x="853.0" y="536.9" width="6.0" height="3.2" fill="none" stroke="#a0a0a0" stroke-width="0.7"/>
<text x="861.0" y="539.2" font-size="2.72" fill="#858585" font-family="Liberation Sans" textLength="12.3" lengthAdjust="spacingAndGlyphs">ULNP6I</text>
<text x="879.3" y="538.4" font-size="2.60" fill="#a8a8a8" font-family="Liberation Sans" textLength="4.0" lengthAdjust="spacingAndGlyphs">SG</text>
<text x="767.2" y="545.0" font-size="2.89" fill="#858585" font-family="Liberation Sans" textLength="41.3" lengthAdjust="spacingAndGlyphs">IT2___ISC8R_ROTL408</text>
<text x="811.0" y="542.9" font-size="2.60" fill="#959595" font-family="Liberation Sans" textLength="5.5" lengthAdjust="spacingAndGlyphs">49</text>
<line x1="809.8" y1="544.3" x2="853" y2="544.3" stroke="#a0a0a0" stroke-width="0.9" />
<rect x="853.0" y="542.7" width="6.0" height="3.2" fill="none" stroke="#a0a0a0" stroke-width="0.7"/>
<text x="861.0" y="545.0" font-size="2.72" fill="#858585" font-family="Liberation Sans" textLength="10.0" lengthAdjust="spacingAndGlyphs">V0_FG</text>
<text x="877.0" y="544.2" font-size="2.60" fill="#a8a8a8" font-family="Liberation Sans" textLength="4.0" lengthAdjust="spacingAndGlyphs">0W</text>
<text x="786.8" y="556.8" font-size="2.89" fill="#858585" font-family="Liberation Sans" textLength="21.7" lengthAdjust="spacingAndGlyphs">DE5I69_AD_</text>
<text x="811.0" y="554.7" font-size="2.60" fill="#959595" font-family="Liberation Sans" textLength="5.5" lengthAdjust="spacingAndGlyphs">FF</text>
<line x1="809.8" y1="556.1" x2="858" y2="556.1" stroke="#a0a0a0" stroke-width="0.9" />
<rect x="858.0" y="554.5" width="6.0" height="3.2" fill="none" stroke="#a0a0a0" stroke-width="0.7"/>
<text x="866.0" y="556.8" font-size="2.72" fill="#858585" font-family="Liberation Sans" textLength="13.3" lengthAdjust="spacingAndGlyphs">E_6DW7</text>
<text x="885.3" y="556.0" font-size="2.60" fill="#a8a8a8" font-family="Liberation Sans" textLength="4.0" lengthAdjust="spacingAndGlyphs">W6</text>
<text x="786.9" y="565.2" font-size="2.89" fill="#858585" font-family="Liberation Sans" textLength="21.6" lengthAdjust="spacingAndGlyphs">TKKPPI8ST_</text>
<text x="811.0" y="563.1" font-size="2.60" fill="#959595" font-family="Liberation Sans" textLength="5.5" lengthAdjust="spacingAndGlyphs">VD</text>
<line x1="809.8" y1="564.5" x2="858" y2="564.5" stroke="#a0a0a0" stroke-width="0.9" />
<rect x="858.0" y="562.9" width="6.0" height="3.2" fill="none" stroke="#a0a0a0" stroke-width="0.7"/>
<text x="866.0" y="565.2" font-size="2.72" fill="#858585" font-family="Liberation Sans" textLength="17.9" lengthAdjust="spacingAndGlyphs">4CSI88RC</text>
<text x="787.1" y="570.9" font-size="2.89" fill="#858585" font-family="Liberation Sans" textLength="21.4" lengthAdjust="spacingAndGlyphs">N9EUVEKNGA</text>
<text x="811.0" y="568.8" font-size="2.60" fill="#959595" font-family="Liberation Sans" textLength="5.5" lengthAdjust="spacingAndGlyphs">7_</text>
<line x1="809.8" y1="570.2" x2="858" y2="570.2" stroke="#a0a0a0" stroke-width="0.9" />
<rect x="858.0" y="568.6" width="6.0" height="3.2" fill="none" stroke="#a0a0a0" stroke-width="0.7"/>
<text x="866.0" y="570.9" font-size="2.72" fill="#858585" font-family="Liberation Sans" textLength="9.4" lengthAdjust="spacingAndGlyphs">F_2U</text>
<text x="782.1" y="576.8" font-size="2.89" fill="#858585" font-family="Liberation Sans" textLength="26.4" lengthAdjust="spacingAndGlyphs">PBBEC__R8G8R</text>
<text x="811.0" y="574.7" font-size="2.60" fill="#959595" font-family="Liberation Sans" textLength="5.5" lengthAdjust="spacingAndGlyphs">R8</text>
<line x1="809.8" y1="576.1" x2="858" y2="576.1" stroke="#a0a0a0" stroke-width="0.9" />
<rect x="858.0" y="574.5" width="6.0" height="3.2" fill="none" stroke="#a0a0a0" stroke-width="0.7"/>
<text x="866.0" y="576.8" font-size="2.72" fill="#858585" font-family="Liberation Sans" textLength="12.2" lengthAdjust="spacingAndGlyphs">3CFVB7</text>
<text x="759.3" y="582.7" font-size="2.89" fill="#858585" font-family="Liberation Sans" textLength="49.2" lengthAdjust="spacingAndGlyphs">5ES6FLV301HDH_RRM_VE_S</text>
<text x="811.0" y="580.6" font-size="2.60" fill="#959595" font-family="Liberation Sans" textLength="5.5" lengthAdjust="spacingAndGlyphs">V5</text>
<line x1="809.8" y1="582" x2="858" y2="582" stroke="#a0a0a0" stroke-width="0.9" />
<rect x="858.0" y="580.4" width="6.0" height="3.2" fill="none" stroke="#a0a0a0" stroke-width="0.7"/>
<text x="866.0" y="582.7" font-size="2.72" fill="#858585" font-family="Liberation Sans" textLength="14.1" lengthAdjust="spacingAndGlyphs">7OW8M_</text>
<text x="886.1" y="581.9" font-size="2.60" fill="#a8a8a8" font-family="Liberation Sans" textLength="4.0" lengthAdjust="spacingAndGlyphs">P6</text>
<text x="780.5" y="588.5" font-size="2.89" fill="#858585" font-family="Liberation Sans" textLength="28.0" lengthAdjust="spacingAndGlyphs">150IU_8UDWW_3</text>
<text x="811.0" y="586.4" font-size="2.60" fill="#959595" font-family="Liberation Sans" textLength="5.5" lengthAdjust="spacingAndGlyphs">R7</text>
<line x1="809.8" y1="587.8" x2="858" y2="587.8" stroke="#a0a0a0" stroke-width="0.9" />
<rect x="858.0" y="586.2" width="6.0" height="3.2" fill="none" stroke="#a0a0a0" stroke-width="0.7"/>
<text x="866.0" y="588.5" font-size="2.72" fill="#858585" font-family="Liberation Sans" textLength="8.7" lengthAdjust="spacingAndGlyphs">1G8I</text>
<text x="880.7" y="587.7" font-size="2.60" fill="#a8a8a8" font-family="Liberation Sans" textLength="4.0" lengthAdjust="spacingAndGlyphs">R_</text>
<text x="760.3" y="596.7" font-size="2.89" fill="#858585" font-family="Liberation Sans" textLength="48.2" lengthAdjust="spacingAndGlyphs">4RDCVHVL_ME80EW_DFFL7C</text>
<text x="811.0" y="594.6" font-size="2.60" fill="#959595" font-family="Liberation Sans" textLength="5.5" lengthAdjust="spacingAndGlyphs">3B</text>
<text x="792.8" y="608.7" font-size="2.89" fill="#858585" font-family="Liberation Sans" textLength="15.7" lengthAdjust="spacingAndGlyphs">3D_O215</text>
<text x="811.0" y="606.6" font-size="2.60" fill="#959595" font-family="Liberation Sans" textLength="5.5" lengthAdjust="spacingAndGlyphs">4P</text>
<line x1="809.8" y1="608" x2="858" y2="608" stroke="#a0a0a0" stroke-width="0.9" />
<rect x="858.0" y="606.4" width="6.0" height="3.2" fill="none" stroke="#a0a0a0" stroke-width="0.7"/>
<text x="866.0" y="608.7" font-size="2.72" fill="#858585" font-family="Liberation Sans" textLength="8.9" lengthAdjust="spacingAndGlyphs">E6_K</text>
<text x="880.9" y="607.9" font-size="2.60" fill="#a8a8a8" font-family="Liberation Sans" textLength="4.0" lengthAdjust="spacingAndGlyphs">EU</text>
<text x="791.6" y="617.3" font-size="2.89" fill="#858585" font-family="Liberation Sans" textLength="16.9" lengthAdjust="spacingAndGlyphs">WL_O_CG_</text>
<text x="811.0" y="615.2" font-size="2.60" fill="#959595" font-family="Liberation Sans" textLength="5.5" lengthAdjust="spacingAndGlyphs">I0</text>
<text x="791.4" y="622.7" font-size="2.89" fill="#858585" font-family="Liberation Sans" textLength="17.1" lengthAdjust="spacingAndGlyphs">0LGB0T_T</text>
<text x="811.0" y="620.6" font-size="2.60" fill="#959595" font-family="Liberation Sans" textLength="5.5" lengthAdjust="spacingAndGlyphs">TA</text>
<text x="787.0" y="629.0" font-size="2.89" fill="#858585" font-family="Liberation Sans" textLength="21.5" lengthAdjust="spacingAndGlyphs">GNRP_5UDO7</text>
<text x="811.0" y="626.9" font-size="2.60" fill="#959595" font-family="Liberation Sans" textLength="5.5" lengthAdjust="spacingAndGlyphs">CR</text>
<line x1="809.8" y1="628.3" x2="858" y2="628.3" stroke="#a0a0a0" stroke-width="0.9" />
<rect x="858.0" y="626.7" width="6.0" height="3.2" fill="none" stroke="#a0a0a0" stroke-width="0.7"/>
<text x="866.0" y="629.0" font-size="2.72" fill="#858585" font-family="Liberation Sans" textLength="16.4" lengthAdjust="spacingAndGlyphs">8H639P4</text>
<text x="888.4" y="628.2" font-size="2.60" fill="#a8a8a8" font-family="Liberation Sans" textLength="4.0" lengthAdjust="spacingAndGlyphs">07</text>
<text x="794.6" y="634.3" font-size="2.89" fill="#858585" font-family="Liberation Sans" textLength="13.9" lengthAdjust="spacingAndGlyphs">UE_MT_</text>
<text x="811.0" y="632.2" font-size="2.60" fill="#959595" font-family="Liberation Sans" textLength="5.5" lengthAdjust="spacingAndGlyphs">OH</text>
<text x="788.4" y="642.7" font-size="2.89" fill="#858585" font-family="Liberation Sans" textLength="20.1" lengthAdjust="spacingAndGlyphs">A_DE_VFL_</text>
<text x="811.0" y="640.6" font-size="2.60" fill="#959595" font-family="Liberation Sans" textLength="5.5" lengthAdjust="spacingAndGlyphs">3F</text>
<line x1="809.8" y1="642" x2="858" y2="642" stroke="#a0a0a0" stroke-width="0.9" />
<rect x="858.0" y="640.4" width="6.0" height="3.2" fill="none" stroke="#a0a0a0" stroke-width="0.7"/>
<text x="866.0" y="642.7" font-size="2.72" fill="#858585" font-family="Liberation Sans" textLength="15.2" lengthAdjust="spacingAndGlyphs">4GLCK_C</text>
<text x="887.2" y="641.9" font-size="2.60" fill="#a8a8a8" font-family="Liberation Sans" textLength="4.0" lengthAdjust="spacingAndGlyphs">48</text>
<text x="788.8" y="649.1" font-size="2.89" fill="#858585" font-family="Liberation Sans" textLength="19.7" lengthAdjust="spacingAndGlyphs">8L9_L4PP_</text>
<text x="811.0" y="647.0" font-size="2.60" fill="#959595" font-family="Liberation Sans" textLength="5.5" lengthAdjust="spacingAndGlyphs">UG</text>
<text x="782.2" y="668.5" font-size="2.89" fill="#858585" font-family="Liberation Sans" textLength="26.3" lengthAdjust="spacingAndGlyphs">OS_8OC5O2PCK</text>
<text x="811.0" y="666.4" font-size="2.60" fill="#959595" font-family="Liberation Sans" textLength="5.5" lengthAdjust="spacingAndGlyphs">OK</text>
<line x1="809.8" y1="667.8" x2="858" y2="667.8" stroke="#a0a0a0" stroke-width="0.9" />
<rect x="858.0" y="666.2" width="6.0" height="3.2" fill="none" stroke="#a0a0a0" stroke-width="0.7"/>
<text x="866.0" y="668.5" font-size="2.72" fill="#858585" font-family="Liberation Sans" textLength="12.0" lengthAdjust="spacingAndGlyphs">UM_L4</text>
<text x="884.0" y="667.7" font-size="2.60" fill="#a8a8a8" font-family="Liberation Sans" textLength="4.0" lengthAdjust="spacingAndGlyphs">IA</text>
<text x="779.1" y="677.5" font-size="2.89" fill="#858585" font-family="Liberation Sans" textLength="29.4" lengthAdjust="spacingAndGlyphs">K_4AAPF__TD3N</text>
<text x="811.0" y="675.4" font-size="2.60" fill="#959595" font-family="Liberation Sans" textLength="5.5" lengthAdjust="spacingAndGlyphs">41</text>
<line x1="809.8" y1="676.8" x2="858" y2="676.8" stroke="#a0a0a0" stroke-width="0.9" />
<rect x="858.0" y="675.2" width="6.0" height="3.2" fill="none" stroke="#a0a0a0" stroke-width="0.7"/>
<text x="866.0" y="677.5" font-size="2.72" fill="#858585" font-family="Liberation Sans" textLength="16.9" lengthAdjust="spacingAndGlyphs">2_9US65V</text>
<text x="888.9" y="676.7" font-size="2.60" fill="#a8a8a8" font-family="Liberation Sans" textLength="4.0" lengthAdjust="spacingAndGlyphs">TB</text>
<text x="739.0" y="596.9" font-size="2.60" fill="#8a8a8a" font-family="Liberation Sans" textLength="8.0" lengthAdjust="spacingAndGlyphs">VN_7</text>
<line x1="809.8" y1="616.6" x2="827.5" y2="616.6" stroke="#8a8a8a" stroke-width="0.9" />
<line x1="827.5" y1="613" x2="827.5" y2="620" stroke="#606060" stroke-width="1" />
<line x1="829.5" y1="613" x2="829.5" y2="620" stroke="#606060" stroke-width="1" />
<text x="831.0" y="614.9" font-size="2.60" fill="#707070" font-family="Liberation Sans" textLength="10.0" lengthAdjust="spacingAndGlyphs">U7R_5</text>
<line x1="841.5" y1="613" x2="841.5" y2="620" stroke="#8a8a8a" stroke-width="0.9" />
<line x1="843.5" y1="613" x2="843.5" y2="620" stroke="#8a8a8a" stroke-width="0.9" />
<line x1="809.8" y1="633.6" x2="831" y2="633.6" stroke="#9a9a9a" stroke-width="0.9" />
<line x1="831" y1="631" x2="831" y2="636" stroke="#9a9a9a" stroke-width="0.9" />
<line x1="809.8" y1="648.4" x2="893" y2="648.4" stroke="#6a6a6a" stroke-width="1" />
<line x1="893" y1="616" x2="893" y2="630" stroke="#6a6a6a" stroke-width="0.9" />
<path d="M891,616 L893,612 L895,616 Z" fill="#303030"/>
<text x="888.0" y="608.4" font-size="2.60" fill="#7a7a7a" font-family="Liberation Sans" textLength="10.0" lengthAdjust="spacingAndGlyphs">7L21I</text>
<path d="M893,630 l-2,2 l4,2.5 l-4,2.5 l4,2.5 l-4,2.5 l2,2 V652 l-2,2 l4,2.5 l-4,2.5 l4,2.5 l-4,2.5 l2,2 V677" fill="none" stroke="#6a6a6a" stroke-width="0.9"/>
<circle cx="893" cy="648.4" r="1" fill="#303030"/>
<line x1="890" y1="677.5" x2="896" y2="677.5" stroke="#b0b0b0" stroke-width="1.2" />
<text x="884.0" y="640.9" font-size="2.60" fill="#8a8a8a" font-family="Liberation Sans" textLength="3.0" lengthAdjust="spacingAndGlyphs">9</text>
<text x="884.0" y="663.9" font-size="2.60" fill="#8a8a8a" font-family="Liberation Sans" textLength="3.0" lengthAdjust="spacingAndGlyphs">C</text>
<circle cx="1038.5" cy="649.5" r="4.2" fill="none" stroke="#8a8a8a" stroke-width="0.9" stroke-dasharray="1.2 0.8"/>
<line x1="1033.0" y1="649.5" x2="1044.0" y2="649.5" stroke="#606060" stroke-width="0.9" />
<line x1="1038.5" y1="644.5" x2="1038.5" y2="657.0" stroke="#606060" stroke-width="0.9" />
<circle cx="1038.5" cy="646.5" r="0.8" fill="#505050"/><circle cx="1038.5" cy="652.5" r="0.8" fill="#505050"/>
<line x1="1037.0" y1="657.0" x2="1038.5" y2="657.0" stroke="#707070" stroke-width="0.8" />
<text x="1027.5" y="640.5" font-size="2.72" fill="#4a4a4a" font-family="Liberation Sans" textLength="22.0" lengthAdjust="spacingAndGlyphs">O2US_HDNDE</text>
<text x="1037.0" y="643.9" font-size="2.60" fill="#707070" font-family="Liberation Sans" textLength="3.5" lengthAdjust="spacingAndGlyphs">IS</text>
<circle cx="1065.5" cy="651.5" r="4.2" fill="none" stroke="#8a8a8a" stroke-width="0.9" stroke-dasharray="1.2 0.8"/>
<line x1="1060.0" y1="651.5" x2="1071.0" y2="651.5" stroke="#606060" stroke-width="0.9" />
<line x1="1065.5" y1="646.5" x2="1065.5" y2="659.0" stroke="#606060" stroke-width="0.9" />
<circle cx="1065.5" cy="648.5" r="0.8" fill="#505050"/><circle cx="1065.5" cy="654.5" r="0.8" fill="#505050"/>
<line x1="1064.0" y1="659.0" x2="1065.5" y2="659.0" stroke="#707070" stroke-width="0.8" />
<text x="1054.5" y="642.5" font-size="2.72" fill="#4a4a4a" font-family="Liberation Sans" textLength="22.0" lengthAdjust="spacingAndGlyphs">DNRE9_6HGW</text>
<text x="1064.0" y="645.9" font-size="2.60" fill="#707070" font-family="Liberation Sans" textLength="3.5" lengthAdjust="spacingAndGlyphs">RM</text>
<circle cx="1092.5" cy="651.5" r="4.2" fill="none" stroke="#8a8a8a" stroke-width="0.9" stroke-dasharray="1.2 0.8"/>
<line x1="1087.0" y1="651.5" x2="1098.0" y2="651.5" stroke="#606060" stroke-width="0.9" />
<line x1="1092.5" y1="646.5" x2="1092.5" y2="659.0" stroke="#606060" stroke-width="0.9" />
<circle cx="1092.5" cy="648.5" r="0.8" fill="#505050"/><circle cx="1092.5" cy="654.5" r="0.8" fill="#505050"/>
<line x1="1091.0" y1="659.0" x2="1092.5" y2="659.0" stroke="#707070" stroke-width="0.8" />
<text x="1081.5" y="642.5" font-size="2.72" fill="#4a4a4a" font-family="Liberation Sans" textLength="22.0" lengthAdjust="spacingAndGlyphs">0KE_29_H__</text>
<text x="1091.0" y="645.9" font-size="2.60" fill="#707070" font-family="Liberation Sans" textLength="3.5" lengthAdjust="spacingAndGlyphs">6D</text>
<circle cx="1125.5" cy="652.5" r="4.2" fill="none" stroke="#8a8a8a" stroke-width="0.9" stroke-dasharray="1.2 0.8"/>
<line x1="1120.0" y1="652.5" x2="1131.0" y2="652.5" stroke="#606060" stroke-width="0.9" />
<line x1="1125.5" y1="647.5" x2="1125.5" y2="660.0" stroke="#606060" stroke-width="0.9" />
<circle cx="1125.5" cy="649.5" r="0.8" fill="#505050"/><circle cx="1125.5" cy="655.5" r="0.8" fill="#505050"/>
<line x1="1124.0" y1="660.0" x2="1125.5" y2="660.0" stroke="#707070" stroke-width="0.8" />
<text x="1114.5" y="643.5" font-size="2.72" fill="#4a4a4a" font-family="Liberation Sans" textLength="22.0" lengthAdjust="spacingAndGlyphs">P8R_8IVLE_</text>
<text x="1124.0" y="646.9" font-size="2.60" fill="#707070" font-family="Liberation Sans" textLength="3.5" lengthAdjust="spacingAndGlyphs">9H</text>
<rect x="1039.5" y="684.5" width="20.0" height="11.5" fill="none" stroke="#808080" stroke-width="0.9"/>
<text x="1040.0" y="687.5" font-size="2.89" fill="#202020" font-family="Liberation Sans" textLength="8.0" lengthAdjust="spacingAndGlyphs">29_O</text>
<text x="1043.0" y="691.4" font-size="2.60" fill="#6a6a6a" font-family="Liberation Sans" textLength="12.0" lengthAdjust="spacingAndGlyphs">6LC85</text>
<text x="1046.0" y="694.9" font-size="2.60" fill="#8a8a8a" font-family="Liberation Sans" textLength="6.0" lengthAdjust="spacingAndGlyphs">B__</text>
<rect x="1039.5" y="699.5" width="20.0" height="12.0" fill="none" stroke="#808080" stroke-width="0.9"/>
<text x="1040.5" y="702.4" font-size="2.60" fill="#6a6a6a" font-family="Liberation Sans" textLength="8.0" lengthAdjust="spacingAndGlyphs">2B00</text>
<text x="1041.5" y="705.9" font-size="2.60" fill="#5a5a5a" font-family="Liberation Sans" textLength="17.0" lengthAdjust="spacingAndGlyphs">G1BCN49P</text>
<text x="1043.5" y="709.7" font-size="2.60" fill="#6a6a6a" font-family="Liberation Sans" textLength="13.0" lengthAdjust="spacingAndGlyphs">PTF_HE</text>
<rect x="1062.5" y="699.5" width="20.0" height="12.0" fill="none" stroke="#808080" stroke-width="0.9"/>
<text x="1063.5" y="702.4" font-size="2.60" fill="#6a6a6a" font-family="Liberation Sans" textLength="8.0" lengthAdjust="spacingAndGlyphs">H58_</text>
<text x="1064.5" y="705.9" font-size="2.60" fill="#5a5a5a" font-family="Liberation Sans" textLength="17.0" lengthAdjust="spacingAndGlyphs">4_V_FLMB</text>
<text x="1066.5" y="709.7" font-size="2.60" fill="#6a6a6a" font-family="Liberation Sans" textLength="13.0" lengthAdjust="spacingAndGlyphs">68_R95</text>
<rect x="1087.5" y="699.5" width="20.0" height="12.0" fill="none" stroke="#808080" stroke-width="0.9"/>
<text x="1088.5" y="702.4" font-size="2.60" fill="#6a6a6a" font-family="Liberation Sans" textLength="8.0" lengthAdjust="spacingAndGlyphs">PAV6</text>
<text x="1089.5" y="705.9" font-size="2.60" fill="#5a5a5a" font-family="Liberation Sans" textLength="17.0" lengthAdjust="spacingAndGlyphs">5M_LR6_G</text>
<text x="1091.5" y="709.7" font-size="2.60" fill="#6a6a6a" font-family="Liberation Sans" textLength="13.0" lengthAdjust="spacingAndGlyphs">PWA8UI</text>
<path d="M1187.5,747.5 H1331.5 M1187.5,747.5 V819.5 M1187.5,761.5 H1331.5 M1187.5,776.5 H1331.5 M1115.5,776.5 H1187.5 M1115.5,776.5 V819.5 M1115.5,790.5 H1331.5 M1115.5,804.5 H1187.5 M1158.5,776.5 V819.5 M1279.5,812 V819.5" fill="none" stroke="#6a6a6a" stroke-width="0.9"/>
<line x1="1187.5" y1="812" x2="1331.5" y2="812" stroke="#a0a0a0" stroke-width="1.3" />
<text x="1191.0" y="752.9" font-size="2.60" fill="#8a8a8a" font-family="Liberation Sans" textLength="8.0" lengthAdjust="spacingAndGlyphs">CD2D</text>
<text x="1190.0" y="766.9" font-size="2.60" fill="#8a8a8a" font-family="Liberation Sans" textLength="16.0" lengthAdjust="spacingAndGlyphs">COB0SL_</text>
<text x="1190.0" y="780.9" font-size="2.60" fill="#7a7a7a" font-family="Liberation Sans" textLength="12.0" lengthAdjust="spacingAndGlyphs">K1RVT</text>
<text x="1198.5" y="788.5" font-size="5.2" fill="#222" font-family="Liberation Sans" textLength="30" lengthAdjust="spacingAndGlyphs">Hardware RD.</text>
<text x="1190.0" y="794.9" font-size="2.60" fill="#8a8a8a" font-family="Liberation Sans" textLength="8.0" lengthAdjust="spacingAndGlyphs">M_K3</text>
<text x="1198.5" y="806" font-size="5.0" fill="#333" font-family="Liberation Serif" textLength="70" lengthAdjust="spacingAndGlyphs">Spreadtrum communications, Inc.</text>
<text x="1199.0" y="816.4" font-size="2.60" fill="#7a7a7a" font-family="Liberation Sans" textLength="42.0" lengthAdjust="spacingAndGlyphs">3V_N__5TFDVNSBN2I__</text>
<text x="1282.0" y="816.4" font-size="2.60" fill="#7a7a7a" font-family="Liberation Sans" textLength="15.0" lengthAdjust="spacingAndGlyphs">PL7G87C</text>
<text x="1119.0" y="781.4" font-size="2.60" fill="#6a6a6a" font-family="Liberation Sans" textLength="12.0" lengthAdjust="spacingAndGlyphs">VCSE2</text>
<text x="1162.0" y="781.4" font-size="2.60" fill="#7a7a7a" font-family="Liberation Sans" textLength="9.0" lengthAdjust="spacingAndGlyphs">S5B3</text>
<text x="1119.0" y="795.9" font-size="2.60" fill="#8a8a8a" font-family="Liberation Sans" textLength="4.0" lengthAdjust="spacingAndGlyphs">56</text>
<text x="1162.0" y="792.9" font-size="2.60" fill="#8a8a8a" font-family="Liberation Sans" textLength="7.0" lengthAdjust="spacingAndGlyphs">PPB</text>
<text x="1119.0" y="809.9" font-size="2.60" fill="#8a8a8a" font-family="Liberation Sans" textLength="10.0" lengthAdjust="spacingAndGlyphs">W8DFL</text>
<text x="1162.0" y="809.9" font-size="2.60" fill="#8a8a8a" font-family="Liberation Sans" textLength="8.0" lengthAdjust="spacingAndGlyphs">2U_5</text>
</svg></body></html>
